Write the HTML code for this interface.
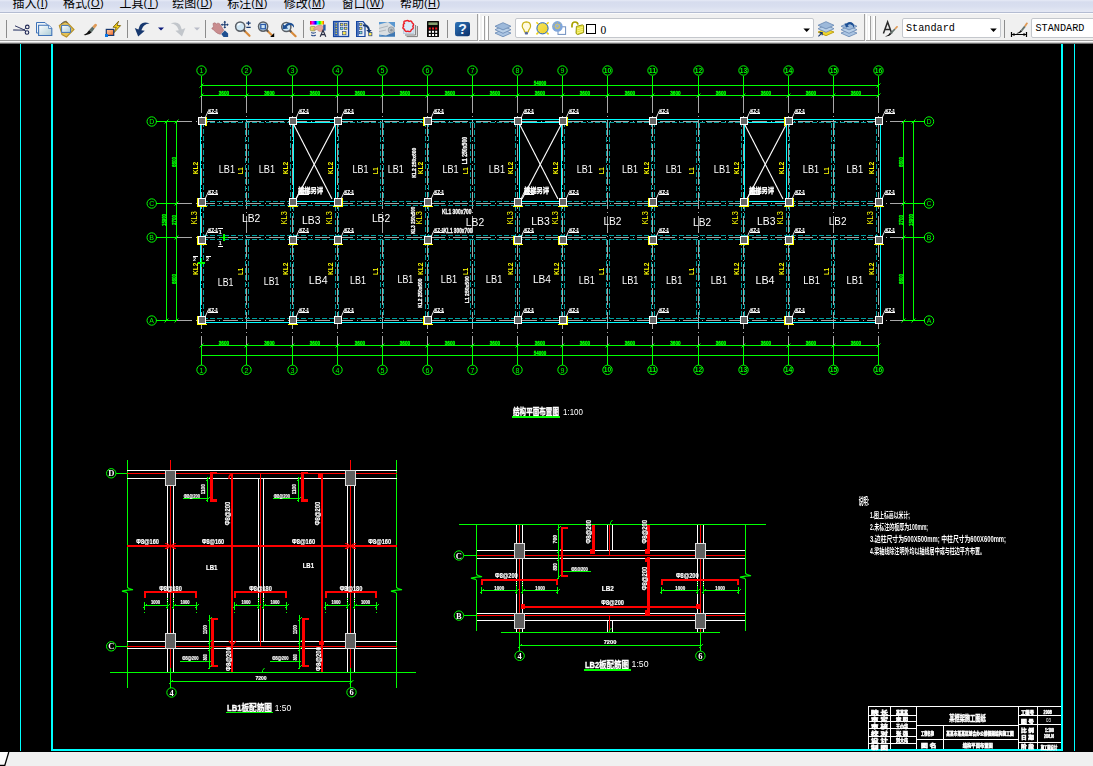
<!DOCTYPE html>
<html lang="zh-CN"><head><meta charset="utf-8"><title>AutoCAD</title>
<style>
html,body{margin:0;padding:0;}
body{width:1093px;height:766px;position:relative;overflow:hidden;background:#f0f0f0;font-family:"Liberation Sans","Noto Sans CJK SC",sans-serif;}
#menubar{position:absolute;left:0;top:0;width:1093px;height:12px;background:linear-gradient(#e6eaf6 0,#d6dcee 2px,#d8deef 6px,#e4e8f4 12px);border-bottom:1px solid #b4bcd2;overflow:hidden}
#mline{position:absolute;left:0;top:13px;width:1093px;height:1px;background:#fcfcfc}
.mi{position:absolute;top:-4.5px;font-size:12px;line-height:16px;color:#000;white-space:nowrap}
.p{font-size:11px;position:relative;top:-0.6px;letter-spacing:0.4px}
#tb{position:absolute;left:0;top:14px;width:1093px;height:26px;background:#f0f0f0}
.edge{position:absolute;left:0;width:1093px;height:1px}
.vln{position:absolute;width:1px}
.dd{position:absolute;top:18px;height:20px;background:#fff;border:1px solid #c4c7cc;border-radius:2px;box-sizing:border-box}
.ddt{position:absolute;top:22px;font-family:"Liberation Mono","Noto Sans CJK SC",monospace;font-size:10.2px;line-height:14px;color:#000;white-space:pre}
#canvas{position:absolute;left:0;top:44px;width:1093px;height:708px;background:#000}
#status{position:absolute;left:0;top:752px;width:1093px;height:14px;background:#f0f0f0}
</style></head><body>
<div id="menubar"><span class="mi" style="left:12.6px">插入<span class="p">(<u>I</u>)</span></span><span class="mi" style="left:62.9px">格式<span class="p">(<u>O</u>)</span></span><span class="mi" style="left:119.5px">工具<span class="p">(<u>T</u>)</span></span><span class="mi" style="left:172.3px">绘图<span class="p">(<u>D</u>)</span></span><span class="mi" style="left:227.2px">标注<span class="p">(<u>N</u>)</span></span><span class="mi" style="left:283.8px">修改<span class="p">(<u>M</u>)</span></span><span class="mi" style="left:341.7px">窗口<span class="p">(<u>W</u>)</span></span><span class="mi" style="left:400px">帮助<span class="p">(<u>H</u>)</span></span></div><div id="mline"></div>
<div id="tb"></div>
<div class="edge" style="top:40px;background:#a0a0a0;width:478px"></div>
<div class="edge" style="top:40px;left:479px;width:386px;background:#a0a0a0"></div>
<div class="edge" style="top:40px;left:866px;width:227px;background:#a0a0a0"></div>
<div class="edge" style="top:41px;background:#fafafa"></div>
<div class="edge" style="top:42px;background:#c8c8c8"></div>
<div class="edge" style="top:43px;background:#6e6e6e"></div>
<div class="vln" style="left:477px;top:14px;height:27px;background:#a0a0a0"></div>
<div class="vln" style="left:479px;top:14px;height:26px;background:#fff"></div>
<div class="vln" style="left:482px;top:16px;height:24px;background:#fff;width:2px"></div><div class="vln" style="left:484px;top:16px;height:24px;background:#a0a0a0"></div>
<div class="vln" style="left:486px;top:16px;height:24px;background:#fff;width:2px"></div><div class="vln" style="left:488px;top:16px;height:24px;background:#a0a0a0"></div>
<div class="vln" style="left:864px;top:14px;height:27px;background:#a0a0a0"></div>
<div class="vln" style="left:866px;top:14px;height:26px;background:#fff"></div>
<div class="vln" style="left:868px;top:16px;height:24px;background:#fff;width:2px"></div><div class="vln" style="left:870px;top:16px;height:24px;background:#a0a0a0"></div>
<div class="vln" style="left:873px;top:16px;height:24px;background:#fff;width:2px"></div><div class="vln" style="left:875px;top:16px;height:24px;background:#a0a0a0"></div>
<div class="dd" style="left:515px;width:299px"></div>
<div class="dd" style="left:902px;width:99px"></div>
<div class="dd" style="left:1031px;width:70px"></div>
<div class="ddt" style="left:600.5px;top:22.5px;font-family:'Liberation Serif',serif;font-size:11.5px">0</div>
<div class="ddt" style="left:906px">Standard</div>
<div class="ddt" style="left:1035.5px">STANDARD</div>
<svg width="1093" height="44" viewBox="0 0 1093 44" style="position:absolute;left:0;top:0"><defs>
<linearGradient id="gp" x1="0" y1="0" x2="1" y2="1"><stop offset="0" stop-color="#ffffff"/><stop offset="1" stop-color="#a9cbd6"/></linearGradient>
<linearGradient id="go" x1="0" y1="0" x2="1" y2="1"><stop offset="0" stop-color="#ffd2b0"/><stop offset="1" stop-color="#f0641e"/></linearGradient>
<linearGradient id="gh" x1="0" y1="0" x2="1" y2="1"><stop offset="0" stop-color="#2f74b8"/><stop offset="1" stop-color="#0a2f6a"/></linearGradient>
<linearGradient id="gs" x1="0" y1="0" x2="1" y2="1"><stop offset="0" stop-color="#f6e560"/><stop offset="1" stop-color="#ecd028"/></linearGradient>
<linearGradient id="rb" x1="0" y1="0" x2="1" y2="0"><stop offset="0" stop-color="#ff0000"/><stop offset="0.2" stop-color="#ff00ff"/><stop offset="0.4" stop-color="#0000ff"/><stop offset="0.55" stop-color="#00ffff"/><stop offset="0.7" stop-color="#00ff00"/><stop offset="0.85" stop-color="#ffff00"/><stop offset="1" stop-color="#ff4000"/></linearGradient>
</defs><g stroke="#1b2352" fill="none"><path d="M13.2 29.9 L24 30.2 L26 31.2 M15 25.8 L24 29.8 L25.6 28.4" stroke-width="0.9"/><path d="M13.2 30.4 L22 30.6" stroke="#7a83a0" stroke-width="0.9"/><circle cx="27.3" cy="26.9" r="1.8" stroke-width="1.1"/><circle cx="27" cy="32.5" r="1.8" stroke-width="1.1"/></g>
<path d="M36.5 22.5 h8.5 l2.5 2.5 v8 h-11 z" fill="#eef4f8" stroke="#3f73b8" stroke-width="1"/><path d="M38.6 25.3 h10 l3.2 3.2 v7 h-13.2 z" fill="url(#gp)" stroke="#3f73b8" stroke-width="1.1"/><path d="M48.6 25.3 v3.2 h3.2" fill="#fff" stroke="#3f73b8" stroke-width="0.8"/>
<path d="M59.3 25.5 L66 21.3 L74 29.5 L66.5 37 L62 34.6 Z" fill="#e4c258" stroke="#b8922a" stroke-width="1.1"/><path d="M61 24.2 q3 -4 6.5 -1.5" fill="none" stroke="#555" stroke-width="1"/><path d="M61.6 25.4 h6.4 l2.6 2.4 v4.6 h-9 z" fill="url(#gp)" stroke="#3f73b8" stroke-width="1"/>
<path d="M83.6 35 q3.6 -1.4 5.6 -5 l2.6 2.2 q-3 3.6 -8.2 2.8z" fill="#111"/><path d="M89.2 30 L92.4 26.6 L94.6 28.6 L91.8 32.2 Z" fill="#5f6f6a"/><path d="M92.4 26.6 L94.8 24 q2.2 -0.6 2.2 1.6 L94.6 28.6 Z" fill="#e09a56"/>
<path d="M118.6 21.2 L113 27.2 L116.3 27.4 L113.2 33.6 L120.6 25.6 L117 25.4 Z" fill="#f4d21a" stroke="#6b5200" stroke-width="0.8"/><rect x="106.3" y="29.4" width="7.4" height="6" fill="url(#go)" stroke="#17376e" stroke-width="1.2"/><rect x="105" y="34" width="3" height="3" fill="#0a78e6"/>
<rect x="127" y="20" width="1" height="18" fill="#8c8c8c" shape-rendering="crispEdges"/>
<rect x="6" y="20" width="1" height="18" fill="#8c8c8c" shape-rendering="crispEdges"/>
<path d="M149.6 23.4 q-9.5 -3.4 -11.2 6.2 l-3.6 -1.6 l3.4 8.4 l6.6 -5.6 l-3.4 -0.6 q1.6 -6.4 8.2 -6.8z" fill="#17386f"/>
<path d="M158 27.5 h6 l-3 3z" fill="#0b1a7a"/>
<path d="M170.6 23.4 q9.5 -3.4 11.2 6.2 l3.6 -1.6 l-3.4 8.4 l-6.6 -5.6 l3.4 -0.6 q-1.6 -6.4 -8.2 -6.8z" fill="#c2c6cb"/>
<path d="M194 27.5 h6 l-3 3z" fill="#b9bcc8"/>
<rect x="205" y="20" width="1" height="18" fill="#8c8c8c" shape-rendering="crispEdges"/>
<path d="M213 23.5 q2 -1.5 3.4 0.4 l1 -0.6 q1.8 -0.6 2.6 1 l3.8 6 l-3.4 4 q-3 -0.6 -5 -2.6 q-2.4 -2.6 -3.6 -3 q0 -1.4 1.8 -1 z" fill="#c98d8f" stroke="#a86c70" stroke-width="0.6"/><path d="M221.3 34 l3.6 -3.6 l3.2 3 v3.6 h-4.6z" fill="#1e4f90"/><path d="M224.8 21.6 v6.2 M221.7 24.7 h6.2" stroke="#17386f" stroke-width="1.1"/><path d="M224.8 20.8 l1.4 1.6 h-2.8z M224.8 28.6 l1.4 -1.6 h-2.8z M220.9 24.7 l1.6 -1.4 v2.8z M228.7 24.7 l-1.6 -1.4 v2.8z" fill="#17386f"/>
<path d="M243.39999999999998 29.8 L249.5 35.8" stroke="#d88a3a" stroke-width="2.2" stroke-linecap="round"/><path d="M243.39999999999998 29.8 L245.2 31.6" stroke="#555" stroke-width="2"/><circle cx="240.2" cy="26.6" r="4.6" fill="#cfe6f4" stroke="#5a5f66" stroke-width="1.5"/><path d="M237.6 25.6 q1 -2 3 -2" stroke="#fff" stroke-width="1.1" fill="none"/>
<path d="M246.3 23.2 h4.4 M248.5 21.2 v4 M246.3 27.4 h4.4" stroke="#17386f" stroke-width="1.2"/>
<path d="M266.3 29.8 L272.40000000000003 35.8" stroke="#d88a3a" stroke-width="2.2" stroke-linecap="round"/><path d="M266.3 29.8 L268.1 31.6" stroke="#555" stroke-width="2"/><circle cx="263.1" cy="26.6" r="4.6" fill="#cfe6f4" stroke="#5a5f66" stroke-width="1.5"/><path d="M260.5 25.6 q1 -2 3 -2" stroke="#fff" stroke-width="1.1" fill="none"/>
<rect x="260.8" y="24.4" width="4.6" height="4.4" fill="none" stroke="#2a5aa8" stroke-width="1.3"/><path d="M274.2 33 v4 h-4z" fill="#000"/>
<path d="M289.5 30.2 L295.6 36.2" stroke="#d88a3a" stroke-width="2.2" stroke-linecap="round"/><path d="M289.5 30.2 L291.3 32" stroke="#555" stroke-width="2"/><circle cx="286.3" cy="27" r="4.6" fill="#cfe6f4" stroke="#5a5f66" stroke-width="1.5"/><path d="M283.7 26 q1 -2 3 -2" stroke="#fff" stroke-width="1.1" fill="none"/>
<path d="M282.6 29.2 l0.4 -5.2 l1.6 1.4 q4 -4.6 8.6 -1.2 q1.4 1.6 0.6 3.6 q-1 -3 -4 -2.8 q-2 0.2 -3.2 2 l1.6 1.6z" fill="#1c4f94"/>
<rect x="303" y="20" width="1" height="18" fill="#8c8c8c" shape-rendering="crispEdges"/>
<rect x="310" y="21" width="14" height="3.6" fill="url(#rb)"/>
<rect x="310.3" y="26.4" width="5" height="4.4" rx="1" fill="#e6d85a" stroke="#8c8a4a" stroke-width="0.7"/><path d="M313.6 28.6 q3 -3.6 7.6 -3.6 l2.2 1.4 v4 q-3 2 -5 0.6 l-1.2 -1.6 l-3.2 0.6 z" fill="#e4a79c" stroke="#b77c74" stroke-width="0.5"/><rect x="323.2" y="24.6" width="2.4" height="6" fill="#2b5ca8"/><path d="M311.2 32.4 q2.4 1.4 4.6 0 M311.2 35 q2.4 1.6 4.6 0" fill="none" stroke="#2c4e8c" stroke-width="1.1"/><path d="M320.2 36.8 l2.8 -6.6 l2.8 6.6 M321.2 34.6 h3.6" fill="none" stroke="#2a2f45" stroke-width="1.2"/>
<rect x="333.6" y="21.5" width="15" height="15" fill="#e9eff7" stroke="#1546a0" stroke-width="1.3"/><rect x="334.3" y="22.2" width="3.6" height="13.6" fill="#2a59b0"/><path d="M338.6 22 v14" stroke="#1546a0" stroke-width="0.7"/><rect x="335.6" y="23.2" width="1.2" height="1.2" fill="#ffe43a"/><rect x="335.6" y="25.6" width="1.2" height="1.2" fill="#ffe43a"/><rect x="335.6" y="28" width="1.2" height="1.2" fill="#ffe43a"/><rect x="335.6" y="30.4" width="1.2" height="1.2" fill="#ffe43a"/><rect x="335.6" y="32.8" width="1.2" height="1.2" fill="#ffe43a"/><rect x="340.4" y="23.4" width="2.6" height="2.4" fill="#f2e24a" stroke="#1f3f86" stroke-width="0.6"/><rect x="344.4" y="23.4" width="2.6" height="2.4" fill="#f2e24a" stroke="#1f3f86" stroke-width="0.6"/><rect x="340.4" y="27.2" width="2.6" height="2.4" fill="#7fe0d0" stroke="#1f3f86" stroke-width="0.6"/><rect x="344.4" y="27.2" width="2.6" height="2.4" fill="#f2e24a" stroke="#1f3f86" stroke-width="0.6"/><rect x="342.4" y="31.4" width="3.6" height="3.4" fill="#ffe94a" stroke="#1f3f86" stroke-width="0.6"/>
<path d="M356.6 21.5 h6.4 l2 2.4 v12.6 h-8.4z" fill="#e4ebf5" stroke="#1546a0" stroke-width="1.2"/><rect x="357.2" y="22.2" width="1.6" height="13.6" fill="#2a59b0"/><rect x="359.6" y="23.2" width="2.4" height="2.4" fill="#f2e24a" stroke="#1f3f86" stroke-width="0.6"/><rect x="359.6" y="27.2" width="2.4" height="2.4" fill="#f2e24a" stroke="#1f3f86" stroke-width="0.6"/><rect x="359.6" y="31.4" width="2.4" height="2.4" fill="#7fe0d0" stroke="#1f3f86" stroke-width="0.6"/><path d="M363 24.4 q6 -0.6 7 5.6 h1.8 l-2.8 3 l-2.8 -3 h1.8 q-0.6 -4 -5 -3.8z" fill="#17386f"/><rect x="368.7" y="32.4" width="3.2" height="3.4" fill="#ffe94a" stroke="#1f3f86" stroke-width="0.7"/>
<rect x="379" y="22" width="16" height="14.6" fill="#5b98d0"/><path d="M379 36.6 L395 30 V36.6z" fill="#3f78b4"/><path d="M379 24.6 L388 22 L395 27.4 V31.4 L386 35.6 L379 34.4z" fill="#d9dee2"/><ellipse cx="391.2" cy="30" rx="3" ry="3.2" fill="#b9c0c6" stroke="#8e979f" stroke-width="0.8"/><ellipse cx="391.4" cy="30.2" rx="1.2" ry="1.4" fill="#8a939b"/><path d="M379 28.4 L388 26 M379 31.6 L386 30" stroke="#aab2b9" stroke-width="0.9"/>
<path d="M405 35 h10.6 v-10 M406.6 36.6 h10.8 v-10.6" fill="none" stroke="#7d7d7d" stroke-width="1"/><rect x="403.4" y="24" width="10.6" height="9.6" fill="#d3e4f3" stroke="#a8bcd0" stroke-width="0.6"/><path d="M404.4 23.4 q-1.6 -2.6 1.4 -2.4 q2 -1.2 3.2 0.4 q2.6 -1.4 3.2 1.4 q2.4 1.4 0.6 3.4 q1.4 2.6 -1.4 3.4 q-0.6 3 -3.6 1.6 q-3 1 -3.4 -2 q-2.6 -1 -0.8 -3 q-1 -1.6 0.8 -2.8z" fill="#d8ebfa" stroke="#ee1c24" stroke-width="1.4"/>
<rect x="427" y="21" width="12" height="16" rx="0.6" fill="#0a0a0a"/><rect x="428.4" y="22.4" width="9.2" height="2.6" fill="#84a070"/><rect x="428.8" y="27.5" width="2" height="2" fill="#ee1c24"/><rect x="432" y="27.5" width="2" height="2" fill="#ee1c24"/><rect x="435.2" y="27.5" width="2" height="2" fill="#ee1c24"/><rect x="428.8" y="30.8" width="2" height="2" fill="#fff"/><rect x="428.8" y="34" width="2" height="2" fill="#fff"/><rect x="432" y="30.8" width="2" height="2" fill="#fff"/><rect x="432" y="34" width="2" height="2" fill="#fff"/><rect x="435.2" y="30.8" width="2" height="2" fill="#fff"/><rect x="435.2" y="34" width="2" height="2" fill="#fff"/>
<rect x="447" y="20" width="1" height="18" fill="#8c8c8c" shape-rendering="crispEdges"/>
<rect x="455" y="22" width="15" height="14.2" rx="2.2" fill="url(#gh)"/><text x="462.5" y="34.4" font-size="14" font-weight="bold" fill="#eaf4ff" text-anchor="middle" font-family="'Liberation Sans',sans-serif">?</text>
<path d="M495 33.1 L503 29.5 L511 33.1 L503 36.7 Z" fill="#aac4e2" stroke="#6f8fb8" stroke-width="0.9"/><path d="M495 29.700000000000003 L503 26.1 L511 29.700000000000003 L503 33.300000000000004 Z" fill="#b9d0e8" stroke="#6f8fb8" stroke-width="0.9"/><path d="M495 26.3 L503 22.7 L511 26.3 L503 29.900000000000002 Z" fill="#9db9da" stroke="#6f8fb8" stroke-width="0.9"/>
<path d="M526.4 21.8 q-4.2 0.2 -4.2 4.4 q0.2 2 1.8 3.8 l0.6 2 h3.6 l0.6 -2 q1.6 -1.8 1.8 -3.8 q0 -4.2 -4.2 -4.4z" fill="#fffbe0" stroke="#c9b218" stroke-width="1.2"/><rect x="524.8" y="32" width="3.2" height="2.6" rx="0.8" fill="#5a6a9a"/>
<path d="M536.4 22.2 l2 2 M548.6 22.2 l-2 2 M536.4 34.4 l2 -2 M548.6 34.4 l-2 -2" stroke="#efd21e" stroke-width="1.6"/><circle cx="542.5" cy="28.3" r="5.6" fill="url(#gs)" stroke="#1e62c8" stroke-width="1"/>
<rect x="558" y="26.8" width="7.6" height="7.6" fill="#fff" stroke="#6f8fc0" stroke-width="1"/><circle cx="557.4" cy="26.4" r="5.3" fill="#7fa6dc"/><circle cx="557.4" cy="26.4" r="2.3" fill="#8fb0e0" stroke="#d8c860" stroke-width="1"/><path d="M557.4 21.8 v9.2 M552.8 26.4 h9.2 M554.2 23.2 l6.4 6.4 M560.6 23.2 l-6.4 6.4" stroke="#c9bc6a" stroke-width="0.7" stroke-dasharray="1.4 4"/>
<path d="M572 27.4 v-2.4 q0.2 -3 3 -3 q2.6 0 3 2.6" fill="none" stroke="#a8a000" stroke-width="1.7"/><path d="M576.4 26.4 l6.2 -1.6 l1 1 v6.8 l-6 2 l-1.6 -1.2z" fill="#e8e23a" stroke="#8f8a00" stroke-width="0.9"/><path d="M577 29 l6 -1.8 M577 31 l6 -1.8 M577 33 l6 -1.8" stroke="#fffcae" stroke-width="0.7"/>
<rect x="586.5" y="24.5" width="9" height="9" fill="#fff" stroke="#000" stroke-width="1" shape-rendering="crispEdges"/>
<path d="M803.4 28.4 h6.6 l-3.3 3.6z" fill="#000"/>
<path d="M818 32.1 L826 28.5 L834 32.1 L826 35.7 Z" fill="#f0d52a" stroke="#b89a10" stroke-width="0.9"/><path d="M818 28.700000000000003 L826 25.1 L834 28.700000000000003 L826 32.300000000000004 Z" fill="#b9d0e8" stroke="#6f8fb8" stroke-width="0.9"/><path d="M818 25.3 L826 21.7 L834 25.3 L826 28.900000000000002 Z" fill="#9db9da" stroke="#6f8fb8" stroke-width="0.9"/>
<path d="M818.4 36.4 l3.6 -3.6 M819.6 32.6 h2.6 v2.6" stroke="#17386f" stroke-width="1.1" fill="none"/>
<path d="M841 33.1 L849 29.5 L857 33.1 L849 36.7 Z" fill="#aac4e2" stroke="#6f8fb8" stroke-width="0.9"/><path d="M841 29.700000000000003 L849 26.1 L857 29.700000000000003 L849 33.300000000000004 Z" fill="#b9d0e8" stroke="#6f8fb8" stroke-width="0.9"/><path d="M841 26.3 L849 22.7 L857 26.3 L849 29.900000000000002 Z" fill="#9db9da" stroke="#6f8fb8" stroke-width="0.9"/>
<path d="M846 27.4 l-1.4 -4.2 l1.6 0.6 q3.4 -3.4 7 -0.4 q1.6 2 0.4 4.4 q-0.4 -3 -3 -3.4 q-1.8 -0.2 -3 1 l1.6 0.8z" fill="#1c4f94"/>
<path d="M883.4 33.4 l4.2 -11.4 l4.2 11.4 M885 29.6 h5.4" fill="none" stroke="#2b2b2b" stroke-width="1.5"/><path d="M885 36.4 q3.4 -0.4 5 -3.6 l1.4 1.2 q-2 2.8 -6.4 2.4z" fill="#111"/><path d="M890 32.8 L894.4 28.4 L895.6 29.6 L891.4 34z" fill="#66736e"/><path d="M894.4 28.4 L896.6 26 q1.4 -0.4 1.4 1 L895.6 29.6z" fill="#e09a56"/>
<path d="M990.2 28.4 h6.6 l-3.3 3.6z" fill="#000"/>
<rect x="1004" y="20" width="1" height="18" fill="#8c8c8c" shape-rendering="crispEdges"/>
<path d="M1011.5 32 v5 M1026.5 32 v5 M1011.5 34.5 h15" stroke="#000" stroke-width="1.2" fill="none"/><path d="M1011.5 34.5 l3 -1.6 v3.2z M1026.5 34.5 l-3 -1.6 v3.2z" fill="#000"/><path d="M1015.6 33.6 q3.6 -0.4 5.2 -3.6 l1.4 1.2 q-2 2.8 -6.6 2.4z" fill="#111"/><path d="M1020.8 30 L1024.2 25.8 L1025.6 27 L1022.2 31.2z" fill="#66736e"/><path d="M1024.2 25.8 L1026.4 22.6 q1.4 -0.4 1.4 1 L1025.6 27z" fill="#e09a56"/></svg>
<div id="canvas"></div>
<div id="status"><svg width="40" height="14" style="position:absolute;left:0;top:0"><path d="M0 0 H8.8 L4.6 14 H0z" fill="#fbfbfb"/><path d="M8.8 0 L4.6 14 M0 13.3 H4.4" fill="none" stroke="#000" stroke-width="1.3"/></svg></div>
<svg width="1093" height="766" viewBox="0 0 1093 766" style="position:absolute;left:0;top:0;will-change:transform" shape-rendering="crispEdges" font-family="'Liberation Sans','Noto Sans CJK SC',sans-serif">
<rect x="20" y="44" width="1" height="707" fill="#00ffff"/>
<rect x="51" y="44" width="2" height="707" fill="#00ffff"/>
<rect x="1061" y="44" width="2" height="707" fill="#00ffff"/>
<rect x="1074" y="44" width="1" height="707" fill="#00ffff"/>
<rect x="51" y="749" width="1012" height="2" fill="#00ffff"/>
<line x1="201.5" y1="96" x2="201.5" y2="346" stroke="#a8a8a8" stroke-dasharray="17 3 1 3"/>
<line x1="246.5" y1="96" x2="246.5" y2="346" stroke="#a8a8a8" stroke-dasharray="17 3 1 3"/>
<line x1="292.5" y1="96" x2="292.5" y2="346" stroke="#a8a8a8" stroke-dasharray="17 3 1 3"/>
<line x1="337.5" y1="96" x2="337.5" y2="346" stroke="#a8a8a8" stroke-dasharray="17 3 1 3"/>
<line x1="382.5" y1="96" x2="382.5" y2="346" stroke="#a8a8a8" stroke-dasharray="17 3 1 3"/>
<line x1="427.5" y1="96" x2="427.5" y2="346" stroke="#a8a8a8" stroke-dasharray="17 3 1 3"/>
<line x1="472.5" y1="96" x2="472.5" y2="346" stroke="#a8a8a8" stroke-dasharray="17 3 1 3"/>
<line x1="517.5" y1="96" x2="517.5" y2="346" stroke="#a8a8a8" stroke-dasharray="17 3 1 3"/>
<line x1="562.5" y1="96" x2="562.5" y2="346" stroke="#a8a8a8" stroke-dasharray="17 3 1 3"/>
<line x1="607.5" y1="96" x2="607.5" y2="346" stroke="#a8a8a8" stroke-dasharray="17 3 1 3"/>
<line x1="652.5" y1="96" x2="652.5" y2="346" stroke="#a8a8a8" stroke-dasharray="17 3 1 3"/>
<line x1="698.5" y1="96" x2="698.5" y2="346" stroke="#a8a8a8" stroke-dasharray="17 3 1 3"/>
<line x1="743.5" y1="96" x2="743.5" y2="346" stroke="#a8a8a8" stroke-dasharray="17 3 1 3"/>
<line x1="788.5" y1="96" x2="788.5" y2="346" stroke="#a8a8a8" stroke-dasharray="17 3 1 3"/>
<line x1="833.5" y1="96" x2="833.5" y2="346" stroke="#a8a8a8" stroke-dasharray="17 3 1 3"/>
<line x1="878.5" y1="96" x2="878.5" y2="346" stroke="#a8a8a8" stroke-dasharray="17 3 1 3"/>
<line x1="177" y1="121.5" x2="903" y2="121.5" stroke="#a8a8a8" stroke-dasharray="15 3.5 1 3.5"/>
<line x1="177" y1="203.5" x2="903" y2="203.5" stroke="#a8a8a8" stroke-dasharray="15 3.5 1 3.5"/>
<line x1="177" y1="237.5" x2="903" y2="237.5" stroke="#a8a8a8" stroke-dasharray="15 3.5 1 3.5"/>
<line x1="177" y1="320.5" x2="903" y2="320.5" stroke="#a8a8a8" stroke-dasharray="15 3.5 1 3.5"/>
<rect x="200" y="119" width="681" height="1" fill="#00ffff"/>
<rect x="200" y="322" width="681" height="1" fill="#00ffff"/>
<rect x="200" y="119" width="1" height="204" fill="#00ffff"/>
<rect x="880" y="119" width="1" height="204" fill="#00ffff"/>
<line x1="203" y1="122.5" x2="878" y2="122.5" stroke="#00a0a0" stroke-dasharray="5 2"/>
<line x1="203" y1="201.5" x2="878" y2="201.5" stroke="#00a0a0" stroke-dasharray="5 2"/>
<line x1="203" y1="205.5" x2="878" y2="205.5" stroke="#00a0a0" stroke-dasharray="5 2"/>
<line x1="203" y1="235.5" x2="878" y2="235.5" stroke="#00a0a0" stroke-dasharray="5 2"/>
<line x1="203" y1="239.5" x2="878" y2="239.5" stroke="#00a0a0" stroke-dasharray="5 2"/>
<line x1="203" y1="318.5" x2="878" y2="318.5" stroke="#00a0a0" stroke-dasharray="5 2"/>
<line x1="203.5" y1="122" x2="203.5" y2="319" stroke="#00a0a0" stroke-dasharray="5 2"/>
<line x1="245.5" y1="123" x2="245.5" y2="201" stroke="#00a0a0" stroke-dasharray="5 2"/>
<line x1="248.5" y1="123" x2="248.5" y2="201" stroke="#00a0a0" stroke-dasharray="5 2"/>
<line x1="245.5" y1="240" x2="245.5" y2="318" stroke="#00a0a0" stroke-dasharray="5 2"/>
<line x1="248.5" y1="240" x2="248.5" y2="318" stroke="#00a0a0" stroke-dasharray="5 2"/>
<line x1="290.5" y1="122" x2="290.5" y2="319" stroke="#00a0a0" stroke-dasharray="5 2"/>
<line x1="293.5" y1="122" x2="293.5" y2="319" stroke="#00a0a0" stroke-dasharray="5 2"/>
<line x1="335.5" y1="122" x2="335.5" y2="319" stroke="#00a0a0" stroke-dasharray="5 2"/>
<line x1="338.5" y1="122" x2="338.5" y2="319" stroke="#00a0a0" stroke-dasharray="5 2"/>
<line x1="380.5" y1="123" x2="380.5" y2="201" stroke="#00a0a0" stroke-dasharray="5 2"/>
<line x1="383.5" y1="123" x2="383.5" y2="201" stroke="#00a0a0" stroke-dasharray="5 2"/>
<line x1="380.5" y1="240" x2="380.5" y2="318" stroke="#00a0a0" stroke-dasharray="5 2"/>
<line x1="383.5" y1="240" x2="383.5" y2="318" stroke="#00a0a0" stroke-dasharray="5 2"/>
<line x1="425.5" y1="122" x2="425.5" y2="319" stroke="#00a0a0" stroke-dasharray="5 2"/>
<line x1="428.5" y1="122" x2="428.5" y2="319" stroke="#00a0a0" stroke-dasharray="5 2"/>
<line x1="470.5" y1="123" x2="470.5" y2="201" stroke="#00a0a0" stroke-dasharray="5 2"/>
<line x1="474.5" y1="123" x2="474.5" y2="201" stroke="#00a0a0" stroke-dasharray="5 2"/>
<line x1="470.5" y1="240" x2="470.5" y2="318" stroke="#00a0a0" stroke-dasharray="5 2"/>
<line x1="474.5" y1="240" x2="474.5" y2="318" stroke="#00a0a0" stroke-dasharray="5 2"/>
<line x1="515.5" y1="122" x2="515.5" y2="319" stroke="#00a0a0" stroke-dasharray="5 2"/>
<line x1="519.5" y1="122" x2="519.5" y2="319" stroke="#00a0a0" stroke-dasharray="5 2"/>
<line x1="561.5" y1="122" x2="561.5" y2="319" stroke="#00a0a0" stroke-dasharray="5 2"/>
<line x1="564.5" y1="122" x2="564.5" y2="319" stroke="#00a0a0" stroke-dasharray="5 2"/>
<line x1="606.5" y1="123" x2="606.5" y2="201" stroke="#00a0a0" stroke-dasharray="5 2"/>
<line x1="609.5" y1="123" x2="609.5" y2="201" stroke="#00a0a0" stroke-dasharray="5 2"/>
<line x1="606.5" y1="240" x2="606.5" y2="318" stroke="#00a0a0" stroke-dasharray="5 2"/>
<line x1="609.5" y1="240" x2="609.5" y2="318" stroke="#00a0a0" stroke-dasharray="5 2"/>
<line x1="651.5" y1="122" x2="651.5" y2="319" stroke="#00a0a0" stroke-dasharray="5 2"/>
<line x1="654.5" y1="122" x2="654.5" y2="319" stroke="#00a0a0" stroke-dasharray="5 2"/>
<line x1="696.5" y1="123" x2="696.5" y2="201" stroke="#00a0a0" stroke-dasharray="5 2"/>
<line x1="699.5" y1="123" x2="699.5" y2="201" stroke="#00a0a0" stroke-dasharray="5 2"/>
<line x1="696.5" y1="240" x2="696.5" y2="318" stroke="#00a0a0" stroke-dasharray="5 2"/>
<line x1="699.5" y1="240" x2="699.5" y2="318" stroke="#00a0a0" stroke-dasharray="5 2"/>
<line x1="741.5" y1="122" x2="741.5" y2="319" stroke="#00a0a0" stroke-dasharray="5 2"/>
<line x1="744.5" y1="122" x2="744.5" y2="319" stroke="#00a0a0" stroke-dasharray="5 2"/>
<line x1="786.5" y1="122" x2="786.5" y2="319" stroke="#00a0a0" stroke-dasharray="5 2"/>
<line x1="789.5" y1="122" x2="789.5" y2="319" stroke="#00a0a0" stroke-dasharray="5 2"/>
<line x1="831.5" y1="123" x2="831.5" y2="201" stroke="#00a0a0" stroke-dasharray="5 2"/>
<line x1="834.5" y1="123" x2="834.5" y2="201" stroke="#00a0a0" stroke-dasharray="5 2"/>
<line x1="831.5" y1="240" x2="831.5" y2="318" stroke="#00a0a0" stroke-dasharray="5 2"/>
<line x1="834.5" y1="240" x2="834.5" y2="318" stroke="#00a0a0" stroke-dasharray="5 2"/>
<line x1="876.5" y1="122" x2="876.5" y2="319" stroke="#00a0a0" stroke-dasharray="5 2"/>
<rect x="293" y="122" width="1" height="80" fill="#00ffff"/>
<rect x="335" y="122" width="1" height="80" fill="#00ffff"/>
<rect x="293" y="122" width="43" height="1" fill="#00ffff"/>
<rect x="293" y="201" width="43" height="1" fill="#00ffff"/>
<g shape-rendering="auto">
<line x1="293.5" y1="124" x2="332" y2="199" stroke="#ffffff" stroke-width="1.15" />
<line x1="335.5" y1="124" x2="296" y2="199" stroke="#ffffff" stroke-width="1.15" />
</g>
<text x="298" y="192.7" fill="#ffffff" font-size="7" textLength="25" lengthAdjust="spacingAndGlyphs" font-weight="bold" stroke="#fff" stroke-width="0.35">楼梯另详</text>
<rect x="519" y="122" width="1" height="80" fill="#00ffff"/>
<rect x="561" y="122" width="1" height="80" fill="#00ffff"/>
<rect x="519" y="122" width="43" height="1" fill="#00ffff"/>
<rect x="519" y="201" width="43" height="1" fill="#00ffff"/>
<g shape-rendering="auto">
<line x1="519.5" y1="124" x2="558" y2="199" stroke="#ffffff" stroke-width="1.15" />
<line x1="561.5" y1="124" x2="522" y2="199" stroke="#ffffff" stroke-width="1.15" />
</g>
<text x="524" y="192.7" fill="#ffffff" font-size="7" textLength="25" lengthAdjust="spacingAndGlyphs" font-weight="bold" stroke="#fff" stroke-width="0.35">楼梯另详</text>
<rect x="744" y="122" width="1" height="80" fill="#00ffff"/>
<rect x="786" y="122" width="1" height="80" fill="#00ffff"/>
<rect x="744" y="122" width="43" height="1" fill="#00ffff"/>
<rect x="744" y="201" width="43" height="1" fill="#00ffff"/>
<g shape-rendering="auto">
<line x1="744.5" y1="124" x2="783" y2="199" stroke="#ffffff" stroke-width="1.15" />
<line x1="786.5" y1="124" x2="747" y2="199" stroke="#ffffff" stroke-width="1.15" />
</g>
<text x="749" y="192.7" fill="#ffffff" font-size="7" textLength="25" lengthAdjust="spacingAndGlyphs" font-weight="bold" stroke="#fff" stroke-width="0.35">楼梯另详</text>
<rect x="205" y="117" width="2" height="9" fill="#ffff00"/>
<rect x="198" y="117" width="8" height="8" fill="#ffffff"/>
<rect x="199" y="118" width="6" height="6" fill="#666666"/>
<g shape-rendering="auto">
<line x1="205.5" y1="117" x2="208.5" y2="110.5" stroke="#ffffff" stroke-width="0.9" />
</g>
<rect x="208" y="113" width="10" height="1" fill="#ffffff"/>
<text x="208.5" y="112.7" fill="#ffffff" font-size="5" textLength="9.5" lengthAdjust="spacingAndGlyphs" font-weight="bold" stroke="#fff" stroke-width="0.15">KZ-1</text>
<rect x="197" y="198" width="2" height="9" fill="#ffff00"/>
<rect x="197" y="206" width="10" height="1" fill="#ffff00"/>
<rect x="198" y="198" width="8" height="8" fill="#ffffff"/>
<rect x="199" y="199" width="6" height="6" fill="#666666"/>
<g shape-rendering="auto">
<line x1="205.5" y1="198" x2="208.5" y2="191.5" stroke="#ffffff" stroke-width="0.9" />
</g>
<rect x="208" y="194" width="10" height="1" fill="#ffffff"/>
<text x="208.5" y="193.7" fill="#ffffff" font-size="5" textLength="9.5" lengthAdjust="spacingAndGlyphs" font-weight="bold" stroke="#fff" stroke-width="0.15">KZ-1</text>
<rect x="197" y="236" width="2" height="9" fill="#ffff00"/>
<rect x="197" y="244" width="10" height="1" fill="#ffff00"/>
<rect x="198" y="236" width="8" height="8" fill="#ffffff"/>
<rect x="199" y="237" width="6" height="6" fill="#666666"/>
<g shape-rendering="auto">
<line x1="205.5" y1="236" x2="208.5" y2="229.5" stroke="#ffffff" stroke-width="0.9" />
</g>
<rect x="208" y="232" width="10" height="1" fill="#ffffff"/>
<text x="208.5" y="231.7" fill="#ffffff" font-size="5" textLength="9.5" lengthAdjust="spacingAndGlyphs" font-weight="bold" stroke="#fff" stroke-width="0.15">KZ-1</text>
<rect x="197" y="316" width="2" height="9" fill="#ffff00"/>
<rect x="197" y="324" width="10" height="1" fill="#ffff00"/>
<rect x="198" y="316" width="8" height="8" fill="#ffffff"/>
<rect x="199" y="317" width="6" height="6" fill="#666666"/>
<g shape-rendering="auto">
<line x1="205.5" y1="316" x2="208.5" y2="309.5" stroke="#ffffff" stroke-width="0.9" />
</g>
<rect x="208" y="312" width="10" height="1" fill="#ffffff"/>
<text x="208.5" y="311.7" fill="#ffffff" font-size="5" textLength="9.5" lengthAdjust="spacingAndGlyphs" font-weight="bold" stroke="#fff" stroke-width="0.15">KZ-1</text>
<rect x="289" y="117" width="8" height="8" fill="#ffffff"/>
<rect x="290" y="118" width="6" height="6" fill="#666666"/>
<g shape-rendering="auto">
<line x1="296.5" y1="117" x2="299.5" y2="110.5" stroke="#ffffff" stroke-width="0.9" />
</g>
<rect x="299" y="113" width="10" height="1" fill="#ffffff"/>
<text x="299.5" y="112.7" fill="#ffffff" font-size="5" textLength="9.5" lengthAdjust="spacingAndGlyphs" font-weight="bold" stroke="#fff" stroke-width="0.15">KZ-1</text>
<rect x="288" y="206" width="10" height="1" fill="#ffff00"/>
<rect x="289" y="198" width="8" height="8" fill="#ffffff"/>
<rect x="290" y="199" width="6" height="6" fill="#666666"/>
<g shape-rendering="auto">
<line x1="296.5" y1="198" x2="299.5" y2="191.5" stroke="#ffffff" stroke-width="0.9" />
</g>
<rect x="299" y="194" width="10" height="1" fill="#ffffff"/>
<text x="299.5" y="193.7" fill="#ffffff" font-size="5" textLength="9.5" lengthAdjust="spacingAndGlyphs" font-weight="bold" stroke="#fff" stroke-width="0.15">KZ-1</text>
<rect x="288" y="244" width="10" height="1" fill="#ffff00"/>
<rect x="289" y="236" width="8" height="8" fill="#ffffff"/>
<rect x="290" y="237" width="6" height="6" fill="#666666"/>
<g shape-rendering="auto">
<line x1="296.5" y1="236" x2="299.5" y2="229.5" stroke="#ffffff" stroke-width="0.9" />
</g>
<rect x="299" y="232" width="10" height="1" fill="#ffffff"/>
<text x="299.5" y="231.7" fill="#ffffff" font-size="5" textLength="9.5" lengthAdjust="spacingAndGlyphs" font-weight="bold" stroke="#fff" stroke-width="0.15">KZ-1</text>
<rect x="288" y="324" width="10" height="1" fill="#ffff00"/>
<rect x="289" y="316" width="8" height="8" fill="#ffffff"/>
<rect x="290" y="317" width="6" height="6" fill="#666666"/>
<g shape-rendering="auto">
<line x1="296.5" y1="316" x2="299.5" y2="309.5" stroke="#ffffff" stroke-width="0.9" />
</g>
<rect x="299" y="312" width="10" height="1" fill="#ffffff"/>
<text x="299.5" y="311.7" fill="#ffffff" font-size="5" textLength="9.5" lengthAdjust="spacingAndGlyphs" font-weight="bold" stroke="#fff" stroke-width="0.15">KZ-1</text>
<rect x="334" y="117" width="8" height="8" fill="#ffffff"/>
<rect x="335" y="118" width="6" height="6" fill="#666666"/>
<g shape-rendering="auto">
<line x1="341.5" y1="117" x2="344.5" y2="110.5" stroke="#ffffff" stroke-width="0.9" />
</g>
<rect x="344" y="113" width="10" height="1" fill="#ffffff"/>
<text x="344.5" y="112.7" fill="#ffffff" font-size="5" textLength="9.5" lengthAdjust="spacingAndGlyphs" font-weight="bold" stroke="#fff" stroke-width="0.15">KZ-1</text>
<rect x="341" y="198" width="2" height="9" fill="#ffff00"/>
<rect x="333" y="206" width="10" height="1" fill="#ffff00"/>
<rect x="334" y="198" width="8" height="8" fill="#ffffff"/>
<rect x="335" y="199" width="6" height="6" fill="#666666"/>
<g shape-rendering="auto">
<line x1="341.5" y1="198" x2="344.5" y2="191.5" stroke="#ffffff" stroke-width="0.9" />
</g>
<rect x="344" y="194" width="10" height="1" fill="#ffffff"/>
<text x="344.5" y="193.7" fill="#ffffff" font-size="5" textLength="9.5" lengthAdjust="spacingAndGlyphs" font-weight="bold" stroke="#fff" stroke-width="0.15">KZ-1</text>
<rect x="333" y="244" width="10" height="1" fill="#ffff00"/>
<rect x="334" y="236" width="8" height="8" fill="#ffffff"/>
<rect x="335" y="237" width="6" height="6" fill="#666666"/>
<g shape-rendering="auto">
<line x1="341.5" y1="236" x2="344.5" y2="229.5" stroke="#ffffff" stroke-width="0.9" />
</g>
<rect x="344" y="232" width="10" height="1" fill="#ffffff"/>
<text x="344.5" y="231.7" fill="#ffffff" font-size="5" textLength="9.5" lengthAdjust="spacingAndGlyphs" font-weight="bold" stroke="#fff" stroke-width="0.15">KZ-1</text>
<rect x="334" y="316" width="8" height="8" fill="#ffffff"/>
<rect x="335" y="317" width="6" height="6" fill="#666666"/>
<g shape-rendering="auto">
<line x1="341.5" y1="316" x2="344.5" y2="309.5" stroke="#ffffff" stroke-width="0.9" />
</g>
<rect x="344" y="312" width="10" height="1" fill="#ffffff"/>
<text x="344.5" y="311.7" fill="#ffffff" font-size="5" textLength="9.5" lengthAdjust="spacingAndGlyphs" font-weight="bold" stroke="#fff" stroke-width="0.15">KZ-1</text>
<rect x="423" y="117" width="2" height="9" fill="#ffff00"/>
<rect x="424" y="117" width="8" height="8" fill="#ffffff"/>
<rect x="425" y="118" width="6" height="6" fill="#666666"/>
<g shape-rendering="auto">
<line x1="431.5" y1="117" x2="434.5" y2="110.5" stroke="#ffffff" stroke-width="0.9" />
</g>
<rect x="434" y="113" width="10" height="1" fill="#ffffff"/>
<text x="434.5" y="112.7" fill="#ffffff" font-size="5" textLength="9.5" lengthAdjust="spacingAndGlyphs" font-weight="bold" stroke="#fff" stroke-width="0.15">KZ-1</text>
<rect x="423" y="206" width="10" height="1" fill="#ffff00"/>
<rect x="424" y="198" width="8" height="8" fill="#ffffff"/>
<rect x="425" y="199" width="6" height="6" fill="#666666"/>
<g shape-rendering="auto">
<line x1="431.5" y1="198" x2="434.5" y2="191.5" stroke="#ffffff" stroke-width="0.9" />
</g>
<rect x="434" y="194" width="10" height="1" fill="#ffffff"/>
<text x="434.5" y="193.7" fill="#ffffff" font-size="5" textLength="9.5" lengthAdjust="spacingAndGlyphs" font-weight="bold" stroke="#fff" stroke-width="0.15">KZ-1</text>
<rect x="423" y="244" width="10" height="1" fill="#ffff00"/>
<rect x="424" y="236" width="8" height="8" fill="#ffffff"/>
<rect x="425" y="237" width="6" height="6" fill="#666666"/>
<g shape-rendering="auto">
<line x1="431.5" y1="236" x2="434.5" y2="229.5" stroke="#ffffff" stroke-width="0.9" />
</g>
<rect x="434" y="232" width="10" height="1" fill="#ffffff"/>
<text x="434.5" y="231.7" fill="#ffffff" font-size="5" textLength="9.5" lengthAdjust="spacingAndGlyphs" font-weight="bold" stroke="#fff" stroke-width="0.15">KZ-1</text>
<rect x="423" y="316" width="2" height="9" fill="#ffff00"/>
<rect x="423" y="324" width="10" height="1" fill="#ffff00"/>
<rect x="424" y="316" width="8" height="8" fill="#ffffff"/>
<rect x="425" y="317" width="6" height="6" fill="#666666"/>
<g shape-rendering="auto">
<line x1="431.5" y1="316" x2="434.5" y2="309.5" stroke="#ffffff" stroke-width="0.9" />
</g>
<rect x="434" y="312" width="10" height="1" fill="#ffffff"/>
<text x="434.5" y="311.7" fill="#ffffff" font-size="5" textLength="9.5" lengthAdjust="spacingAndGlyphs" font-weight="bold" stroke="#fff" stroke-width="0.15">KZ-1</text>
<rect x="514" y="117" width="8" height="8" fill="#ffffff"/>
<rect x="515" y="118" width="6" height="6" fill="#666666"/>
<g shape-rendering="auto">
<line x1="521.5" y1="117" x2="524.5" y2="110.5" stroke="#ffffff" stroke-width="0.9" />
</g>
<rect x="524" y="113" width="10" height="1" fill="#ffffff"/>
<text x="524.5" y="112.7" fill="#ffffff" font-size="5" textLength="9.5" lengthAdjust="spacingAndGlyphs" font-weight="bold" stroke="#fff" stroke-width="0.15">KZ-1</text>
<rect x="513" y="206" width="10" height="1" fill="#ffff00"/>
<rect x="514" y="198" width="8" height="8" fill="#ffffff"/>
<rect x="515" y="199" width="6" height="6" fill="#666666"/>
<g shape-rendering="auto">
<line x1="521.5" y1="198" x2="524.5" y2="191.5" stroke="#ffffff" stroke-width="0.9" />
</g>
<rect x="524" y="194" width="10" height="1" fill="#ffffff"/>
<text x="524.5" y="193.7" fill="#ffffff" font-size="5" textLength="9.5" lengthAdjust="spacingAndGlyphs" font-weight="bold" stroke="#fff" stroke-width="0.15">KZ-1</text>
<rect x="513" y="236" width="2" height="9" fill="#ffff00"/>
<rect x="513" y="244" width="10" height="1" fill="#ffff00"/>
<rect x="514" y="236" width="8" height="8" fill="#ffffff"/>
<rect x="515" y="237" width="6" height="6" fill="#666666"/>
<g shape-rendering="auto">
<line x1="521.5" y1="236" x2="524.5" y2="229.5" stroke="#ffffff" stroke-width="0.9" />
</g>
<rect x="524" y="232" width="10" height="1" fill="#ffffff"/>
<text x="524.5" y="231.7" fill="#ffffff" font-size="5" textLength="9.5" lengthAdjust="spacingAndGlyphs" font-weight="bold" stroke="#fff" stroke-width="0.15">KZ-1</text>
<rect x="514" y="316" width="8" height="8" fill="#ffffff"/>
<rect x="515" y="317" width="6" height="6" fill="#666666"/>
<g shape-rendering="auto">
<line x1="521.5" y1="316" x2="524.5" y2="309.5" stroke="#ffffff" stroke-width="0.9" />
</g>
<rect x="524" y="312" width="10" height="1" fill="#ffffff"/>
<text x="524.5" y="311.7" fill="#ffffff" font-size="5" textLength="9.5" lengthAdjust="spacingAndGlyphs" font-weight="bold" stroke="#fff" stroke-width="0.15">KZ-1</text>
<rect x="566" y="117" width="2" height="9" fill="#ffff00"/>
<rect x="559" y="117" width="8" height="8" fill="#ffffff"/>
<rect x="560" y="118" width="6" height="6" fill="#666666"/>
<g shape-rendering="auto">
<line x1="566.5" y1="117" x2="569.5" y2="110.5" stroke="#ffffff" stroke-width="0.9" />
</g>
<rect x="569" y="113" width="10" height="1" fill="#ffffff"/>
<text x="569.5" y="112.7" fill="#ffffff" font-size="5" textLength="9.5" lengthAdjust="spacingAndGlyphs" font-weight="bold" stroke="#fff" stroke-width="0.15">KZ-1</text>
<rect x="558" y="206" width="10" height="1" fill="#ffff00"/>
<rect x="559" y="198" width="8" height="8" fill="#ffffff"/>
<rect x="560" y="199" width="6" height="6" fill="#666666"/>
<g shape-rendering="auto">
<line x1="566.5" y1="198" x2="569.5" y2="191.5" stroke="#ffffff" stroke-width="0.9" />
</g>
<rect x="569" y="194" width="10" height="1" fill="#ffffff"/>
<text x="569.5" y="193.7" fill="#ffffff" font-size="5" textLength="9.5" lengthAdjust="spacingAndGlyphs" font-weight="bold" stroke="#fff" stroke-width="0.15">KZ-1</text>
<rect x="558" y="236" width="2" height="9" fill="#ffff00"/>
<rect x="558" y="244" width="10" height="1" fill="#ffff00"/>
<rect x="559" y="236" width="8" height="8" fill="#ffffff"/>
<rect x="560" y="237" width="6" height="6" fill="#666666"/>
<g shape-rendering="auto">
<line x1="566.5" y1="236" x2="569.5" y2="229.5" stroke="#ffffff" stroke-width="0.9" />
</g>
<rect x="569" y="232" width="10" height="1" fill="#ffffff"/>
<text x="569.5" y="231.7" fill="#ffffff" font-size="5" textLength="9.5" lengthAdjust="spacingAndGlyphs" font-weight="bold" stroke="#fff" stroke-width="0.15">KZ-1</text>
<rect x="566" y="316" width="2" height="9" fill="#ffff00"/>
<rect x="558" y="324" width="10" height="1" fill="#ffff00"/>
<rect x="559" y="316" width="8" height="8" fill="#ffffff"/>
<rect x="560" y="317" width="6" height="6" fill="#666666"/>
<g shape-rendering="auto">
<line x1="566.5" y1="316" x2="569.5" y2="309.5" stroke="#ffffff" stroke-width="0.9" />
</g>
<rect x="569" y="312" width="10" height="1" fill="#ffffff"/>
<text x="569.5" y="311.7" fill="#ffffff" font-size="5" textLength="9.5" lengthAdjust="spacingAndGlyphs" font-weight="bold" stroke="#fff" stroke-width="0.15">KZ-1</text>
<rect x="649" y="117" width="8" height="8" fill="#ffffff"/>
<rect x="650" y="118" width="6" height="6" fill="#666666"/>
<g shape-rendering="auto">
<line x1="656.5" y1="117" x2="659.5" y2="110.5" stroke="#ffffff" stroke-width="0.9" />
</g>
<rect x="659" y="113" width="10" height="1" fill="#ffffff"/>
<text x="659.5" y="112.7" fill="#ffffff" font-size="5" textLength="9.5" lengthAdjust="spacingAndGlyphs" font-weight="bold" stroke="#fff" stroke-width="0.15">KZ-1</text>
<rect x="648" y="198" width="2" height="9" fill="#ffff00"/>
<rect x="648" y="206" width="10" height="1" fill="#ffff00"/>
<rect x="649" y="198" width="8" height="8" fill="#ffffff"/>
<rect x="650" y="199" width="6" height="6" fill="#666666"/>
<g shape-rendering="auto">
<line x1="656.5" y1="198" x2="659.5" y2="191.5" stroke="#ffffff" stroke-width="0.9" />
</g>
<rect x="659" y="194" width="10" height="1" fill="#ffffff"/>
<text x="659.5" y="193.7" fill="#ffffff" font-size="5" textLength="9.5" lengthAdjust="spacingAndGlyphs" font-weight="bold" stroke="#fff" stroke-width="0.15">KZ-1</text>
<rect x="648" y="236" width="2" height="9" fill="#ffff00"/>
<rect x="648" y="244" width="10" height="1" fill="#ffff00"/>
<rect x="649" y="236" width="8" height="8" fill="#ffffff"/>
<rect x="650" y="237" width="6" height="6" fill="#666666"/>
<g shape-rendering="auto">
<line x1="656.5" y1="236" x2="659.5" y2="229.5" stroke="#ffffff" stroke-width="0.9" />
</g>
<rect x="659" y="232" width="10" height="1" fill="#ffffff"/>
<text x="659.5" y="231.7" fill="#ffffff" font-size="5" textLength="9.5" lengthAdjust="spacingAndGlyphs" font-weight="bold" stroke="#fff" stroke-width="0.15">KZ-1</text>
<rect x="649" y="316" width="8" height="8" fill="#ffffff"/>
<rect x="650" y="317" width="6" height="6" fill="#666666"/>
<g shape-rendering="auto">
<line x1="656.5" y1="316" x2="659.5" y2="309.5" stroke="#ffffff" stroke-width="0.9" />
</g>
<rect x="659" y="312" width="10" height="1" fill="#ffffff"/>
<text x="659.5" y="311.7" fill="#ffffff" font-size="5" textLength="9.5" lengthAdjust="spacingAndGlyphs" font-weight="bold" stroke="#fff" stroke-width="0.15">KZ-1</text>
<rect x="740" y="117" width="8" height="8" fill="#ffffff"/>
<rect x="741" y="118" width="6" height="6" fill="#666666"/>
<g shape-rendering="auto">
<line x1="747.5" y1="117" x2="750.5" y2="110.5" stroke="#ffffff" stroke-width="0.9" />
</g>
<rect x="750" y="113" width="10" height="1" fill="#ffffff"/>
<text x="750.5" y="112.7" fill="#ffffff" font-size="5" textLength="9.5" lengthAdjust="spacingAndGlyphs" font-weight="bold" stroke="#fff" stroke-width="0.15">KZ-1</text>
<rect x="747" y="198" width="2" height="9" fill="#ffff00"/>
<rect x="739" y="206" width="10" height="1" fill="#ffff00"/>
<rect x="740" y="198" width="8" height="8" fill="#ffffff"/>
<rect x="741" y="199" width="6" height="6" fill="#666666"/>
<g shape-rendering="auto">
<line x1="747.5" y1="198" x2="750.5" y2="191.5" stroke="#ffffff" stroke-width="0.9" />
</g>
<rect x="750" y="194" width="10" height="1" fill="#ffffff"/>
<text x="750.5" y="193.7" fill="#ffffff" font-size="5" textLength="9.5" lengthAdjust="spacingAndGlyphs" font-weight="bold" stroke="#fff" stroke-width="0.15">KZ-1</text>
<rect x="747" y="236" width="2" height="9" fill="#ffff00"/>
<rect x="739" y="244" width="10" height="1" fill="#ffff00"/>
<rect x="740" y="236" width="8" height="8" fill="#ffffff"/>
<rect x="741" y="237" width="6" height="6" fill="#666666"/>
<g shape-rendering="auto">
<line x1="747.5" y1="236" x2="750.5" y2="229.5" stroke="#ffffff" stroke-width="0.9" />
</g>
<rect x="750" y="232" width="10" height="1" fill="#ffffff"/>
<text x="750.5" y="231.7" fill="#ffffff" font-size="5" textLength="9.5" lengthAdjust="spacingAndGlyphs" font-weight="bold" stroke="#fff" stroke-width="0.15">KZ-1</text>
<rect x="740" y="316" width="8" height="8" fill="#ffffff"/>
<rect x="741" y="317" width="6" height="6" fill="#666666"/>
<g shape-rendering="auto">
<line x1="747.5" y1="316" x2="750.5" y2="309.5" stroke="#ffffff" stroke-width="0.9" />
</g>
<rect x="750" y="312" width="10" height="1" fill="#ffffff"/>
<text x="750.5" y="311.7" fill="#ffffff" font-size="5" textLength="9.5" lengthAdjust="spacingAndGlyphs" font-weight="bold" stroke="#fff" stroke-width="0.15">KZ-1</text>
<rect x="784" y="117" width="2" height="9" fill="#ffff00"/>
<rect x="785" y="117" width="8" height="8" fill="#ffffff"/>
<rect x="786" y="118" width="6" height="6" fill="#666666"/>
<g shape-rendering="auto">
<line x1="792.5" y1="117" x2="795.5" y2="110.5" stroke="#ffffff" stroke-width="0.9" />
</g>
<rect x="795" y="113" width="10" height="1" fill="#ffffff"/>
<text x="795.5" y="112.7" fill="#ffffff" font-size="5" textLength="9.5" lengthAdjust="spacingAndGlyphs" font-weight="bold" stroke="#fff" stroke-width="0.15">KZ-1</text>
<rect x="792" y="198" width="2" height="9" fill="#ffff00"/>
<rect x="784" y="206" width="10" height="1" fill="#ffff00"/>
<rect x="785" y="198" width="8" height="8" fill="#ffffff"/>
<rect x="786" y="199" width="6" height="6" fill="#666666"/>
<g shape-rendering="auto">
<line x1="792.5" y1="198" x2="795.5" y2="191.5" stroke="#ffffff" stroke-width="0.9" />
</g>
<rect x="795" y="194" width="10" height="1" fill="#ffffff"/>
<text x="795.5" y="193.7" fill="#ffffff" font-size="5" textLength="9.5" lengthAdjust="spacingAndGlyphs" font-weight="bold" stroke="#fff" stroke-width="0.15">KZ-1</text>
<rect x="792" y="236" width="2" height="9" fill="#ffff00"/>
<rect x="784" y="244" width="10" height="1" fill="#ffff00"/>
<rect x="785" y="236" width="8" height="8" fill="#ffffff"/>
<rect x="786" y="237" width="6" height="6" fill="#666666"/>
<g shape-rendering="auto">
<line x1="792.5" y1="236" x2="795.5" y2="229.5" stroke="#ffffff" stroke-width="0.9" />
</g>
<rect x="795" y="232" width="10" height="1" fill="#ffffff"/>
<text x="795.5" y="231.7" fill="#ffffff" font-size="5" textLength="9.5" lengthAdjust="spacingAndGlyphs" font-weight="bold" stroke="#fff" stroke-width="0.15">KZ-1</text>
<rect x="784" y="316" width="2" height="9" fill="#ffff00"/>
<rect x="784" y="324" width="10" height="1" fill="#ffff00"/>
<rect x="785" y="316" width="8" height="8" fill="#ffffff"/>
<rect x="786" y="317" width="6" height="6" fill="#666666"/>
<g shape-rendering="auto">
<line x1="792.5" y1="316" x2="795.5" y2="309.5" stroke="#ffffff" stroke-width="0.9" />
</g>
<rect x="795" y="312" width="10" height="1" fill="#ffffff"/>
<text x="795.5" y="311.7" fill="#ffffff" font-size="5" textLength="9.5" lengthAdjust="spacingAndGlyphs" font-weight="bold" stroke="#fff" stroke-width="0.15">KZ-1</text>
<rect x="875" y="117" width="8" height="8" fill="#ffffff"/>
<rect x="876" y="118" width="6" height="6" fill="#666666"/>
<g shape-rendering="auto">
<line x1="882.5" y1="117" x2="885.5" y2="110.5" stroke="#ffffff" stroke-width="0.9" />
</g>
<rect x="885" y="113" width="10" height="1" fill="#ffffff"/>
<text x="885.5" y="112.7" fill="#ffffff" font-size="5" textLength="9.5" lengthAdjust="spacingAndGlyphs" font-weight="bold" stroke="#fff" stroke-width="0.15">KZ-1</text>
<rect x="874" y="206" width="10" height="1" fill="#ffff00"/>
<rect x="875" y="198" width="8" height="8" fill="#ffffff"/>
<rect x="876" y="199" width="6" height="6" fill="#666666"/>
<g shape-rendering="auto">
<line x1="882.5" y1="198" x2="885.5" y2="191.5" stroke="#ffffff" stroke-width="0.9" />
</g>
<rect x="885" y="194" width="10" height="1" fill="#ffffff"/>
<text x="885.5" y="193.7" fill="#ffffff" font-size="5" textLength="9.5" lengthAdjust="spacingAndGlyphs" font-weight="bold" stroke="#fff" stroke-width="0.15">KZ-1</text>
<rect x="874" y="244" width="10" height="1" fill="#ffff00"/>
<rect x="875" y="236" width="8" height="8" fill="#ffffff"/>
<rect x="876" y="237" width="6" height="6" fill="#666666"/>
<g shape-rendering="auto">
<line x1="882.5" y1="236" x2="885.5" y2="229.5" stroke="#ffffff" stroke-width="0.9" />
</g>
<rect x="885" y="232" width="10" height="1" fill="#ffffff"/>
<text x="885.5" y="231.7" fill="#ffffff" font-size="5" textLength="9.5" lengthAdjust="spacingAndGlyphs" font-weight="bold" stroke="#fff" stroke-width="0.15">KZ-1</text>
<rect x="875" y="316" width="8" height="8" fill="#ffffff"/>
<rect x="876" y="317" width="6" height="6" fill="#666666"/>
<g shape-rendering="auto">
<line x1="882.5" y1="316" x2="885.5" y2="309.5" stroke="#ffffff" stroke-width="0.9" />
</g>
<rect x="885" y="312" width="10" height="1" fill="#ffffff"/>
<text x="885.5" y="311.7" fill="#ffffff" font-size="5" textLength="9.5" lengthAdjust="spacingAndGlyphs" font-weight="bold" stroke="#fff" stroke-width="0.15">KZ-1</text>
<rect x="201" y="85" width="678" height="1" fill="#00ff00"/>
<rect x="201" y="95" width="678" height="1" fill="#00ff00"/>
<rect x="201" y="76" width="1" height="20" fill="#00ff00"/>
<circle cx="201.5" cy="70.5" r="4.7" fill="none" stroke="#00ff00" shape-rendering="auto"/>
<text x="201.5" y="73.2" fill="#00ff00" font-size="7" text-anchor="middle" >1</text>
<path d="M199.5 97.5 L203.5 93.5" stroke="#00ff00" shape-rendering="auto"/>
<text x="224.0" y="95" fill="#00ff00" font-size="5.8" text-anchor="middle" textLength="10.5" lengthAdjust="spacingAndGlyphs" font-weight="bold" stroke="#00ff00" stroke-width="0.35">3600</text>
<rect x="246" y="76" width="1" height="20" fill="#00ff00"/>
<circle cx="246.5" cy="70.5" r="4.7" fill="none" stroke="#00ff00" shape-rendering="auto"/>
<text x="246.5" y="73.2" fill="#00ff00" font-size="7" text-anchor="middle" >2</text>
<path d="M244.5 97.5 L248.5 93.5" stroke="#00ff00" shape-rendering="auto"/>
<text x="269.5" y="95" fill="#00ff00" font-size="5.8" text-anchor="middle" textLength="10.5" lengthAdjust="spacingAndGlyphs" font-weight="bold" stroke="#00ff00" stroke-width="0.35">3600</text>
<rect x="292" y="76" width="1" height="20" fill="#00ff00"/>
<circle cx="292.5" cy="70.5" r="4.7" fill="none" stroke="#00ff00" shape-rendering="auto"/>
<text x="292.5" y="73.2" fill="#00ff00" font-size="7" text-anchor="middle" >3</text>
<path d="M290.5 97.5 L294.5 93.5" stroke="#00ff00" shape-rendering="auto"/>
<text x="315.0" y="95" fill="#00ff00" font-size="5.8" text-anchor="middle" textLength="10.5" lengthAdjust="spacingAndGlyphs" font-weight="bold" stroke="#00ff00" stroke-width="0.35">3600</text>
<rect x="337" y="76" width="1" height="20" fill="#00ff00"/>
<circle cx="337.5" cy="70.5" r="4.7" fill="none" stroke="#00ff00" shape-rendering="auto"/>
<text x="337.5" y="73.2" fill="#00ff00" font-size="7" text-anchor="middle" >4</text>
<path d="M335.5 97.5 L339.5 93.5" stroke="#00ff00" shape-rendering="auto"/>
<text x="360.0" y="95" fill="#00ff00" font-size="5.8" text-anchor="middle" textLength="10.5" lengthAdjust="spacingAndGlyphs" font-weight="bold" stroke="#00ff00" stroke-width="0.35">3600</text>
<rect x="382" y="76" width="1" height="20" fill="#00ff00"/>
<circle cx="382.5" cy="70.5" r="4.7" fill="none" stroke="#00ff00" shape-rendering="auto"/>
<text x="382.5" y="73.2" fill="#00ff00" font-size="7" text-anchor="middle" >5</text>
<path d="M380.5 97.5 L384.5 93.5" stroke="#00ff00" shape-rendering="auto"/>
<text x="405.0" y="95" fill="#00ff00" font-size="5.8" text-anchor="middle" textLength="10.5" lengthAdjust="spacingAndGlyphs" font-weight="bold" stroke="#00ff00" stroke-width="0.35">3600</text>
<rect x="427" y="76" width="1" height="20" fill="#00ff00"/>
<circle cx="427.5" cy="70.5" r="4.7" fill="none" stroke="#00ff00" shape-rendering="auto"/>
<text x="427.5" y="73.2" fill="#00ff00" font-size="7" text-anchor="middle" >6</text>
<path d="M425.5 97.5 L429.5 93.5" stroke="#00ff00" shape-rendering="auto"/>
<text x="450.0" y="95" fill="#00ff00" font-size="5.8" text-anchor="middle" textLength="10.5" lengthAdjust="spacingAndGlyphs" font-weight="bold" stroke="#00ff00" stroke-width="0.35">3600</text>
<rect x="472" y="76" width="1" height="20" fill="#00ff00"/>
<circle cx="472.5" cy="70.5" r="4.7" fill="none" stroke="#00ff00" shape-rendering="auto"/>
<text x="472.5" y="73.2" fill="#00ff00" font-size="7" text-anchor="middle" >7</text>
<path d="M470.5 97.5 L474.5 93.5" stroke="#00ff00" shape-rendering="auto"/>
<text x="495.0" y="95" fill="#00ff00" font-size="5.8" text-anchor="middle" textLength="10.5" lengthAdjust="spacingAndGlyphs" font-weight="bold" stroke="#00ff00" stroke-width="0.35">3600</text>
<rect x="517" y="76" width="1" height="20" fill="#00ff00"/>
<circle cx="517.5" cy="70.5" r="4.7" fill="none" stroke="#00ff00" shape-rendering="auto"/>
<text x="517.5" y="73.2" fill="#00ff00" font-size="7" text-anchor="middle" >8</text>
<path d="M515.5 97.5 L519.5 93.5" stroke="#00ff00" shape-rendering="auto"/>
<text x="540.0" y="95" fill="#00ff00" font-size="5.8" text-anchor="middle" textLength="10.5" lengthAdjust="spacingAndGlyphs" font-weight="bold" stroke="#00ff00" stroke-width="0.35">3600</text>
<rect x="562" y="76" width="1" height="20" fill="#00ff00"/>
<circle cx="562.5" cy="70.5" r="4.7" fill="none" stroke="#00ff00" shape-rendering="auto"/>
<text x="562.5" y="73.2" fill="#00ff00" font-size="7" text-anchor="middle" >9</text>
<path d="M560.5 97.5 L564.5 93.5" stroke="#00ff00" shape-rendering="auto"/>
<text x="585.0" y="95" fill="#00ff00" font-size="5.8" text-anchor="middle" textLength="10.5" lengthAdjust="spacingAndGlyphs" font-weight="bold" stroke="#00ff00" stroke-width="0.35">3600</text>
<rect x="607" y="76" width="1" height="20" fill="#00ff00"/>
<circle cx="607.5" cy="70.5" r="4.7" fill="none" stroke="#00ff00" shape-rendering="auto"/>
<text x="607.5" y="73.0" fill="#00ff00" font-size="6.8" text-anchor="middle" textLength="7.4" lengthAdjust="spacingAndGlyphs" font-weight="bold" >10</text>
<path d="M605.5 97.5 L609.5 93.5" stroke="#00ff00" shape-rendering="auto"/>
<text x="630.0" y="95" fill="#00ff00" font-size="5.8" text-anchor="middle" textLength="10.5" lengthAdjust="spacingAndGlyphs" font-weight="bold" stroke="#00ff00" stroke-width="0.35">3600</text>
<rect x="652" y="76" width="1" height="20" fill="#00ff00"/>
<circle cx="652.5" cy="70.5" r="4.7" fill="none" stroke="#00ff00" shape-rendering="auto"/>
<text x="652.5" y="73.0" fill="#00ff00" font-size="6.8" text-anchor="middle" textLength="7.4" lengthAdjust="spacingAndGlyphs" font-weight="bold" >11</text>
<path d="M650.5 97.5 L654.5 93.5" stroke="#00ff00" shape-rendering="auto"/>
<text x="675.5" y="95" fill="#00ff00" font-size="5.8" text-anchor="middle" textLength="10.5" lengthAdjust="spacingAndGlyphs" font-weight="bold" stroke="#00ff00" stroke-width="0.35">3600</text>
<rect x="698" y="76" width="1" height="20" fill="#00ff00"/>
<circle cx="698.5" cy="70.5" r="4.7" fill="none" stroke="#00ff00" shape-rendering="auto"/>
<text x="698.5" y="73.0" fill="#00ff00" font-size="6.8" text-anchor="middle" textLength="7.4" lengthAdjust="spacingAndGlyphs" font-weight="bold" >12</text>
<path d="M696.5 97.5 L700.5 93.5" stroke="#00ff00" shape-rendering="auto"/>
<text x="721.0" y="95" fill="#00ff00" font-size="5.8" text-anchor="middle" textLength="10.5" lengthAdjust="spacingAndGlyphs" font-weight="bold" stroke="#00ff00" stroke-width="0.35">3600</text>
<rect x="743" y="76" width="1" height="20" fill="#00ff00"/>
<circle cx="743.5" cy="70.5" r="4.7" fill="none" stroke="#00ff00" shape-rendering="auto"/>
<text x="743.5" y="73.0" fill="#00ff00" font-size="6.8" text-anchor="middle" textLength="7.4" lengthAdjust="spacingAndGlyphs" font-weight="bold" >13</text>
<path d="M741.5 97.5 L745.5 93.5" stroke="#00ff00" shape-rendering="auto"/>
<text x="766.0" y="95" fill="#00ff00" font-size="5.8" text-anchor="middle" textLength="10.5" lengthAdjust="spacingAndGlyphs" font-weight="bold" stroke="#00ff00" stroke-width="0.35">3600</text>
<rect x="788" y="76" width="1" height="20" fill="#00ff00"/>
<circle cx="788.5" cy="70.5" r="4.7" fill="none" stroke="#00ff00" shape-rendering="auto"/>
<text x="788.5" y="73.0" fill="#00ff00" font-size="6.8" text-anchor="middle" textLength="7.4" lengthAdjust="spacingAndGlyphs" font-weight="bold" >14</text>
<path d="M786.5 97.5 L790.5 93.5" stroke="#00ff00" shape-rendering="auto"/>
<text x="811.0" y="95" fill="#00ff00" font-size="5.8" text-anchor="middle" textLength="10.5" lengthAdjust="spacingAndGlyphs" font-weight="bold" stroke="#00ff00" stroke-width="0.35">3600</text>
<rect x="833" y="76" width="1" height="20" fill="#00ff00"/>
<circle cx="833.5" cy="70.5" r="4.7" fill="none" stroke="#00ff00" shape-rendering="auto"/>
<text x="833.5" y="73.0" fill="#00ff00" font-size="6.8" text-anchor="middle" textLength="7.4" lengthAdjust="spacingAndGlyphs" font-weight="bold" >15</text>
<path d="M831.5 97.5 L835.5 93.5" stroke="#00ff00" shape-rendering="auto"/>
<text x="856.0" y="95" fill="#00ff00" font-size="5.8" text-anchor="middle" textLength="10.5" lengthAdjust="spacingAndGlyphs" font-weight="bold" stroke="#00ff00" stroke-width="0.35">3600</text>
<rect x="878" y="76" width="1" height="20" fill="#00ff00"/>
<circle cx="878.5" cy="70.5" r="4.7" fill="none" stroke="#00ff00" shape-rendering="auto"/>
<text x="878.5" y="73.0" fill="#00ff00" font-size="6.8" text-anchor="middle" textLength="7.4" lengthAdjust="spacingAndGlyphs" font-weight="bold" >16</text>
<path d="M876.5 97.5 L880.5 93.5" stroke="#00ff00" shape-rendering="auto"/>
<text x="540" y="85" fill="#00ff00" font-size="5.8" text-anchor="middle" textLength="12.5" lengthAdjust="spacingAndGlyphs" font-weight="bold" stroke="#00ff00" stroke-width="0.35">54000</text>
<path d="M199.5 87.5 l4 -4 M876.5 87.5 l4 -4" stroke="#00ff00" shape-rendering="auto"/>
<rect x="201" y="345" width="678" height="1" fill="#00ff00"/>
<rect x="201" y="355" width="678" height="1" fill="#00ff00"/>
<rect x="201" y="345" width="1" height="20" fill="#00ff00"/>
<circle cx="201.5" cy="369.8" r="4.7" fill="none" stroke="#00ff00" shape-rendering="auto"/>
<text x="201.5" y="372.5" fill="#00ff00" font-size="7" text-anchor="middle" >1</text>
<path d="M199.5 347.5 L203.5 343.5" stroke="#00ff00" shape-rendering="auto"/>
<text x="224.0" y="345" fill="#00ff00" font-size="5.8" text-anchor="middle" textLength="10.5" lengthAdjust="spacingAndGlyphs" font-weight="bold" stroke="#00ff00" stroke-width="0.35">3600</text>
<rect x="246" y="345" width="1" height="20" fill="#00ff00"/>
<circle cx="246.5" cy="369.8" r="4.7" fill="none" stroke="#00ff00" shape-rendering="auto"/>
<text x="246.5" y="372.5" fill="#00ff00" font-size="7" text-anchor="middle" >2</text>
<path d="M244.5 347.5 L248.5 343.5" stroke="#00ff00" shape-rendering="auto"/>
<text x="269.5" y="345" fill="#00ff00" font-size="5.8" text-anchor="middle" textLength="10.5" lengthAdjust="spacingAndGlyphs" font-weight="bold" stroke="#00ff00" stroke-width="0.35">3600</text>
<rect x="292" y="345" width="1" height="20" fill="#00ff00"/>
<circle cx="292.5" cy="369.8" r="4.7" fill="none" stroke="#00ff00" shape-rendering="auto"/>
<text x="292.5" y="372.5" fill="#00ff00" font-size="7" text-anchor="middle" >3</text>
<path d="M290.5 347.5 L294.5 343.5" stroke="#00ff00" shape-rendering="auto"/>
<text x="315.0" y="345" fill="#00ff00" font-size="5.8" text-anchor="middle" textLength="10.5" lengthAdjust="spacingAndGlyphs" font-weight="bold" stroke="#00ff00" stroke-width="0.35">3600</text>
<rect x="337" y="345" width="1" height="20" fill="#00ff00"/>
<circle cx="337.5" cy="369.8" r="4.7" fill="none" stroke="#00ff00" shape-rendering="auto"/>
<text x="337.5" y="372.5" fill="#00ff00" font-size="7" text-anchor="middle" >4</text>
<path d="M335.5 347.5 L339.5 343.5" stroke="#00ff00" shape-rendering="auto"/>
<text x="360.0" y="345" fill="#00ff00" font-size="5.8" text-anchor="middle" textLength="10.5" lengthAdjust="spacingAndGlyphs" font-weight="bold" stroke="#00ff00" stroke-width="0.35">3600</text>
<rect x="382" y="345" width="1" height="20" fill="#00ff00"/>
<circle cx="382.5" cy="369.8" r="4.7" fill="none" stroke="#00ff00" shape-rendering="auto"/>
<text x="382.5" y="372.5" fill="#00ff00" font-size="7" text-anchor="middle" >5</text>
<path d="M380.5 347.5 L384.5 343.5" stroke="#00ff00" shape-rendering="auto"/>
<text x="405.0" y="345" fill="#00ff00" font-size="5.8" text-anchor="middle" textLength="10.5" lengthAdjust="spacingAndGlyphs" font-weight="bold" stroke="#00ff00" stroke-width="0.35">3600</text>
<rect x="427" y="345" width="1" height="20" fill="#00ff00"/>
<circle cx="427.5" cy="369.8" r="4.7" fill="none" stroke="#00ff00" shape-rendering="auto"/>
<text x="427.5" y="372.5" fill="#00ff00" font-size="7" text-anchor="middle" >6</text>
<path d="M425.5 347.5 L429.5 343.5" stroke="#00ff00" shape-rendering="auto"/>
<text x="450.0" y="345" fill="#00ff00" font-size="5.8" text-anchor="middle" textLength="10.5" lengthAdjust="spacingAndGlyphs" font-weight="bold" stroke="#00ff00" stroke-width="0.35">3600</text>
<rect x="472" y="345" width="1" height="20" fill="#00ff00"/>
<circle cx="472.5" cy="369.8" r="4.7" fill="none" stroke="#00ff00" shape-rendering="auto"/>
<text x="472.5" y="372.5" fill="#00ff00" font-size="7" text-anchor="middle" >7</text>
<path d="M470.5 347.5 L474.5 343.5" stroke="#00ff00" shape-rendering="auto"/>
<text x="495.0" y="345" fill="#00ff00" font-size="5.8" text-anchor="middle" textLength="10.5" lengthAdjust="spacingAndGlyphs" font-weight="bold" stroke="#00ff00" stroke-width="0.35">3600</text>
<rect x="517" y="345" width="1" height="20" fill="#00ff00"/>
<circle cx="517.5" cy="369.8" r="4.7" fill="none" stroke="#00ff00" shape-rendering="auto"/>
<text x="517.5" y="372.5" fill="#00ff00" font-size="7" text-anchor="middle" >8</text>
<path d="M515.5 347.5 L519.5 343.5" stroke="#00ff00" shape-rendering="auto"/>
<text x="540.0" y="345" fill="#00ff00" font-size="5.8" text-anchor="middle" textLength="10.5" lengthAdjust="spacingAndGlyphs" font-weight="bold" stroke="#00ff00" stroke-width="0.35">3600</text>
<rect x="562" y="345" width="1" height="20" fill="#00ff00"/>
<circle cx="562.5" cy="369.8" r="4.7" fill="none" stroke="#00ff00" shape-rendering="auto"/>
<text x="562.5" y="372.5" fill="#00ff00" font-size="7" text-anchor="middle" >9</text>
<path d="M560.5 347.5 L564.5 343.5" stroke="#00ff00" shape-rendering="auto"/>
<text x="585.0" y="345" fill="#00ff00" font-size="5.8" text-anchor="middle" textLength="10.5" lengthAdjust="spacingAndGlyphs" font-weight="bold" stroke="#00ff00" stroke-width="0.35">3600</text>
<rect x="607" y="345" width="1" height="20" fill="#00ff00"/>
<circle cx="607.5" cy="369.8" r="4.7" fill="none" stroke="#00ff00" shape-rendering="auto"/>
<text x="607.5" y="372.3" fill="#00ff00" font-size="6.8" text-anchor="middle" textLength="7.4" lengthAdjust="spacingAndGlyphs" font-weight="bold" >10</text>
<path d="M605.5 347.5 L609.5 343.5" stroke="#00ff00" shape-rendering="auto"/>
<text x="630.0" y="345" fill="#00ff00" font-size="5.8" text-anchor="middle" textLength="10.5" lengthAdjust="spacingAndGlyphs" font-weight="bold" stroke="#00ff00" stroke-width="0.35">3600</text>
<rect x="652" y="345" width="1" height="20" fill="#00ff00"/>
<circle cx="652.5" cy="369.8" r="4.7" fill="none" stroke="#00ff00" shape-rendering="auto"/>
<text x="652.5" y="372.3" fill="#00ff00" font-size="6.8" text-anchor="middle" textLength="7.4" lengthAdjust="spacingAndGlyphs" font-weight="bold" >11</text>
<path d="M650.5 347.5 L654.5 343.5" stroke="#00ff00" shape-rendering="auto"/>
<text x="675.5" y="345" fill="#00ff00" font-size="5.8" text-anchor="middle" textLength="10.5" lengthAdjust="spacingAndGlyphs" font-weight="bold" stroke="#00ff00" stroke-width="0.35">3600</text>
<rect x="698" y="345" width="1" height="20" fill="#00ff00"/>
<circle cx="698.5" cy="369.8" r="4.7" fill="none" stroke="#00ff00" shape-rendering="auto"/>
<text x="698.5" y="372.3" fill="#00ff00" font-size="6.8" text-anchor="middle" textLength="7.4" lengthAdjust="spacingAndGlyphs" font-weight="bold" >12</text>
<path d="M696.5 347.5 L700.5 343.5" stroke="#00ff00" shape-rendering="auto"/>
<text x="721.0" y="345" fill="#00ff00" font-size="5.8" text-anchor="middle" textLength="10.5" lengthAdjust="spacingAndGlyphs" font-weight="bold" stroke="#00ff00" stroke-width="0.35">3600</text>
<rect x="743" y="345" width="1" height="20" fill="#00ff00"/>
<circle cx="743.5" cy="369.8" r="4.7" fill="none" stroke="#00ff00" shape-rendering="auto"/>
<text x="743.5" y="372.3" fill="#00ff00" font-size="6.8" text-anchor="middle" textLength="7.4" lengthAdjust="spacingAndGlyphs" font-weight="bold" >13</text>
<path d="M741.5 347.5 L745.5 343.5" stroke="#00ff00" shape-rendering="auto"/>
<text x="766.0" y="345" fill="#00ff00" font-size="5.8" text-anchor="middle" textLength="10.5" lengthAdjust="spacingAndGlyphs" font-weight="bold" stroke="#00ff00" stroke-width="0.35">3600</text>
<rect x="788" y="345" width="1" height="20" fill="#00ff00"/>
<circle cx="788.5" cy="369.8" r="4.7" fill="none" stroke="#00ff00" shape-rendering="auto"/>
<text x="788.5" y="372.3" fill="#00ff00" font-size="6.8" text-anchor="middle" textLength="7.4" lengthAdjust="spacingAndGlyphs" font-weight="bold" >14</text>
<path d="M786.5 347.5 L790.5 343.5" stroke="#00ff00" shape-rendering="auto"/>
<text x="811.0" y="345" fill="#00ff00" font-size="5.8" text-anchor="middle" textLength="10.5" lengthAdjust="spacingAndGlyphs" font-weight="bold" stroke="#00ff00" stroke-width="0.35">3600</text>
<rect x="833" y="345" width="1" height="20" fill="#00ff00"/>
<circle cx="833.5" cy="369.8" r="4.7" fill="none" stroke="#00ff00" shape-rendering="auto"/>
<text x="833.5" y="372.3" fill="#00ff00" font-size="6.8" text-anchor="middle" textLength="7.4" lengthAdjust="spacingAndGlyphs" font-weight="bold" >15</text>
<path d="M831.5 347.5 L835.5 343.5" stroke="#00ff00" shape-rendering="auto"/>
<text x="856.0" y="345" fill="#00ff00" font-size="5.8" text-anchor="middle" textLength="10.5" lengthAdjust="spacingAndGlyphs" font-weight="bold" stroke="#00ff00" stroke-width="0.35">3600</text>
<rect x="878" y="345" width="1" height="20" fill="#00ff00"/>
<circle cx="878.5" cy="369.8" r="4.7" fill="none" stroke="#00ff00" shape-rendering="auto"/>
<text x="878.5" y="372.3" fill="#00ff00" font-size="6.8" text-anchor="middle" textLength="7.4" lengthAdjust="spacingAndGlyphs" font-weight="bold" >16</text>
<path d="M876.5 347.5 L880.5 343.5" stroke="#00ff00" shape-rendering="auto"/>
<text x="540" y="355" fill="#00ff00" font-size="5.8" text-anchor="middle" textLength="12.5" lengthAdjust="spacingAndGlyphs" font-weight="bold" stroke="#00ff00" stroke-width="0.35">54000</text>
<rect x="166" y="121" width="1" height="200" fill="#00ff00"/>
<rect x="176" y="121" width="1" height="200" fill="#00ff00"/>
<rect x="903" y="121" width="1" height="200" fill="#00ff00"/>
<rect x="913" y="121" width="1" height="200" fill="#00ff00"/>
<rect x="156" y="121" width="21" height="1" fill="#00ff00"/>
<circle cx="151.7" cy="121.5" r="4.7" fill="none" stroke="#00ff00" shape-rendering="auto"/>
<text x="151.7" y="124.2" fill="#00ff00" font-size="7" text-anchor="middle" >D</text>
<rect x="903" y="121" width="22" height="1" fill="#00ff00"/>
<circle cx="929" cy="121.5" r="4.7" fill="none" stroke="#00ff00" shape-rendering="auto"/>
<text x="929" y="124.2" fill="#00ff00" font-size="7" text-anchor="middle" >D</text>
<path d="M174.5 123.5 l4 -4 M901.5 123.5 l4 -4" stroke="#00ff00" shape-rendering="auto"/>
<rect x="156" y="203" width="21" height="1" fill="#00ff00"/>
<circle cx="151.7" cy="203.5" r="4.7" fill="none" stroke="#00ff00" shape-rendering="auto"/>
<text x="151.7" y="206.2" fill="#00ff00" font-size="7" text-anchor="middle" >C</text>
<rect x="903" y="203" width="22" height="1" fill="#00ff00"/>
<circle cx="929" cy="203.5" r="4.7" fill="none" stroke="#00ff00" shape-rendering="auto"/>
<text x="929" y="206.2" fill="#00ff00" font-size="7" text-anchor="middle" >C</text>
<path d="M174.5 205.5 l4 -4 M901.5 205.5 l4 -4" stroke="#00ff00" shape-rendering="auto"/>
<rect x="156" y="237" width="21" height="1" fill="#00ff00"/>
<circle cx="151.7" cy="237.5" r="4.7" fill="none" stroke="#00ff00" shape-rendering="auto"/>
<text x="151.7" y="240.2" fill="#00ff00" font-size="7" text-anchor="middle" >B</text>
<rect x="903" y="237" width="22" height="1" fill="#00ff00"/>
<circle cx="929" cy="237.5" r="4.7" fill="none" stroke="#00ff00" shape-rendering="auto"/>
<text x="929" y="240.2" fill="#00ff00" font-size="7" text-anchor="middle" >B</text>
<path d="M174.5 239.5 l4 -4 M901.5 239.5 l4 -4" stroke="#00ff00" shape-rendering="auto"/>
<rect x="156" y="320" width="21" height="1" fill="#00ff00"/>
<circle cx="151.7" cy="320.5" r="4.7" fill="none" stroke="#00ff00" shape-rendering="auto"/>
<text x="151.7" y="323.2" fill="#00ff00" font-size="7" text-anchor="middle" >A</text>
<rect x="903" y="320" width="22" height="1" fill="#00ff00"/>
<circle cx="929" cy="320.5" r="4.7" fill="none" stroke="#00ff00" shape-rendering="auto"/>
<text x="929" y="323.2" fill="#00ff00" font-size="7" text-anchor="middle" >A</text>
<path d="M174.5 322.5 l4 -4 M901.5 322.5 l4 -4" stroke="#00ff00" shape-rendering="auto"/>
<path d="M164.5 123.5 l4 -4 M164.5 322.5 l4 -4 M911.5 123.5 l4 -4 M911.5 322.5 l4 -4" stroke="#00ff00" shape-rendering="auto"/>
<text x="176" y="162" fill="#00ff00" font-size="5.8" text-anchor="middle" transform="rotate(-90 176 162)" textLength="10" lengthAdjust="spacingAndGlyphs" font-weight="bold" stroke="#00ff00" stroke-width="0.35">6600</text>
<text x="176" y="220" fill="#00ff00" font-size="5.8" text-anchor="middle" transform="rotate(-90 176 220)" textLength="10" lengthAdjust="spacingAndGlyphs" font-weight="bold" stroke="#00ff00" stroke-width="0.35">2700</text>
<text x="176" y="279" fill="#00ff00" font-size="5.8" text-anchor="middle" transform="rotate(-90 176 279)" textLength="10" lengthAdjust="spacingAndGlyphs" font-weight="bold" stroke="#00ff00" stroke-width="0.35">6600</text>
<text x="166" y="220" fill="#00ff00" font-size="5.8" text-anchor="middle" transform="rotate(-90 166 220)" textLength="12" lengthAdjust="spacingAndGlyphs" font-weight="bold" stroke="#00ff00" stroke-width="0.35">15900</text>
<text x="903" y="162" fill="#00ff00" font-size="5.8" text-anchor="middle" transform="rotate(-90 903 162)" textLength="10" lengthAdjust="spacingAndGlyphs" font-weight="bold" stroke="#00ff00" stroke-width="0.35">6600</text>
<text x="903" y="220" fill="#00ff00" font-size="5.8" text-anchor="middle" transform="rotate(-90 903 220)" textLength="10" lengthAdjust="spacingAndGlyphs" font-weight="bold" stroke="#00ff00" stroke-width="0.35">2700</text>
<text x="903" y="279" fill="#00ff00" font-size="5.8" text-anchor="middle" transform="rotate(-90 903 279)" textLength="10" lengthAdjust="spacingAndGlyphs" font-weight="bold" stroke="#00ff00" stroke-width="0.35">6600</text>
<text x="913" y="220" fill="#00ff00" font-size="5.8" text-anchor="middle" transform="rotate(-90 913 220)" textLength="12" lengthAdjust="spacingAndGlyphs" font-weight="bold" stroke="#00ff00" stroke-width="0.35">15900</text>
<text x="218.7" y="173" fill="#ffffff" font-size="10.3" textLength="16.3" lengthAdjust="spacingAndGlyphs" >LB1</text>
<text x="258.7" y="173" fill="#ffffff" font-size="10.3" textLength="16.5" lengthAdjust="spacingAndGlyphs" >LB1</text>
<text x="352.5" y="173" fill="#ffffff" font-size="10.3" textLength="16.0" lengthAdjust="spacingAndGlyphs" >LB1</text>
<text x="387.8" y="173" fill="#ffffff" font-size="10.3" textLength="16.0" lengthAdjust="spacingAndGlyphs" >LB1</text>
<text x="442.4" y="173" fill="#ffffff" font-size="10.3" textLength="16.3" lengthAdjust="spacingAndGlyphs" >LB1</text>
<text x="488.7" y="173" fill="#ffffff" font-size="10.3" textLength="16.3" lengthAdjust="spacingAndGlyphs" >LB1</text>
<text x="576.7" y="173" fill="#ffffff" font-size="10.3" textLength="16.0" lengthAdjust="spacingAndGlyphs" >LB1</text>
<text x="621.9" y="173" fill="#ffffff" font-size="10.3" textLength="16.0" lengthAdjust="spacingAndGlyphs" >LB1</text>
<text x="665.7" y="173" fill="#ffffff" font-size="10.3" textLength="16.1" lengthAdjust="spacingAndGlyphs" >LB1</text>
<text x="713.8" y="173" fill="#ffffff" font-size="10.3" textLength="16.5" lengthAdjust="spacingAndGlyphs" >LB1</text>
<text x="802.8" y="173" fill="#ffffff" font-size="10.3" textLength="16.3" lengthAdjust="spacingAndGlyphs" >LB1</text>
<text x="846.6" y="173" fill="#ffffff" font-size="10.3" textLength="16.5" lengthAdjust="spacingAndGlyphs" >LB1</text>
<text x="217.8" y="286" fill="#ffffff" font-size="10.3" textLength="15.7" lengthAdjust="spacingAndGlyphs" >LB1</text>
<text x="263.8" y="285" fill="#ffffff" font-size="10.3" textLength="15.5" lengthAdjust="spacingAndGlyphs" >LB1</text>
<text x="308.8" y="284" fill="#ffffff" font-size="10.3" textLength="18.9" lengthAdjust="spacingAndGlyphs" >LB4</text>
<text x="350.1" y="284" fill="#ffffff" font-size="10.3" textLength="16.0" lengthAdjust="spacingAndGlyphs" >LB1</text>
<text x="397.5" y="283" fill="#ffffff" font-size="10.3" textLength="15.8" lengthAdjust="spacingAndGlyphs" >LB1</text>
<text x="440.8" y="283" fill="#ffffff" font-size="10.3" textLength="16.4" lengthAdjust="spacingAndGlyphs" >LB1</text>
<text x="485.8" y="283" fill="#ffffff" font-size="10.3" textLength="16.5" lengthAdjust="spacingAndGlyphs" >LB1</text>
<text x="532.9" y="283" fill="#ffffff" font-size="10.3" textLength="18.1" lengthAdjust="spacingAndGlyphs" >LB4</text>
<text x="578.7" y="284" fill="#ffffff" font-size="10.3" textLength="16.1" lengthAdjust="spacingAndGlyphs" >LB1</text>
<text x="622" y="284" fill="#ffffff" font-size="10.3" textLength="16.5" lengthAdjust="spacingAndGlyphs" >LB1</text>
<text x="665.9" y="284" fill="#ffffff" font-size="10.3" textLength="16.5" lengthAdjust="spacingAndGlyphs" >LB1</text>
<text x="710.7" y="284" fill="#ffffff" font-size="10.3" textLength="16.5" lengthAdjust="spacingAndGlyphs" >LB1</text>
<text x="755.4" y="284" fill="#ffffff" font-size="10.3" textLength="19.2" lengthAdjust="spacingAndGlyphs" >LB4</text>
<text x="803.3" y="284" fill="#ffffff" font-size="10.3" textLength="16.5" lengthAdjust="spacingAndGlyphs" >LB1</text>
<text x="846.6" y="284" fill="#ffffff" font-size="10.3" textLength="16.6" lengthAdjust="spacingAndGlyphs" >LB1</text>
<text x="242" y="222.3" fill="#ffffff" font-size="10.3" textLength="18.3" lengthAdjust="spacingAndGlyphs" >LB2</text>
<text x="302" y="224" fill="#ffffff" font-size="10.3" textLength="18.4" lengthAdjust="spacingAndGlyphs" >LB3</text>
<text x="371.9" y="222" fill="#ffffff" font-size="10.3" textLength="18.3" lengthAdjust="spacingAndGlyphs" >LB2</text>
<text x="465.8" y="226" fill="#ffffff" font-size="10.3" textLength="18.4" lengthAdjust="spacingAndGlyphs" >LB2</text>
<text x="531.3" y="225" fill="#ffffff" font-size="10.3" textLength="18.6" lengthAdjust="spacingAndGlyphs" >LB3</text>
<text x="603.4" y="225" fill="#ffffff" font-size="10.3" textLength="18.1" lengthAdjust="spacingAndGlyphs" >LB2</text>
<text x="693.1" y="225.5" fill="#ffffff" font-size="10.3" textLength="17.9" lengthAdjust="spacingAndGlyphs" >LB2</text>
<text x="757" y="224.5" fill="#ffffff" font-size="10.3" textLength="18.4" lengthAdjust="spacingAndGlyphs" >LB3</text>
<text x="828.8" y="225.3" fill="#ffffff" font-size="10.3" textLength="17.6" lengthAdjust="spacingAndGlyphs" >LB2</text>
<text x="197.7" y="174.3" fill="#ffff00" font-size="7" transform="rotate(-90 197.7 174.3)" textLength="12.4" lengthAdjust="spacingAndGlyphs" font-weight="bold" >KL2</text>
<text x="197.7" y="275" fill="#ffff00" font-size="7" transform="rotate(-90 197.7 275)" textLength="12.4" lengthAdjust="spacingAndGlyphs" font-weight="bold" >KL2</text>
<text x="196.8" y="224.3" fill="#ffff00" font-size="9" transform="rotate(-90 196.8 224.3)" textLength="13" lengthAdjust="spacingAndGlyphs" >KL3</text>
<text x="242.8" y="174.3" fill="#ffff00" font-size="7" transform="rotate(-90 242.8 174.3)" textLength="7" lengthAdjust="spacingAndGlyphs" font-weight="bold" >L1</text>
<text x="242.8" y="275" fill="#ffff00" font-size="7" transform="rotate(-90 242.8 275)" textLength="7" lengthAdjust="spacingAndGlyphs" font-weight="bold" >L1</text>
<text x="287.9" y="174.3" fill="#ffff00" font-size="7" transform="rotate(-90 287.9 174.3)" textLength="12.4" lengthAdjust="spacingAndGlyphs" font-weight="bold" >KL2</text>
<text x="287.9" y="275" fill="#ffff00" font-size="7" transform="rotate(-90 287.9 275)" textLength="12.4" lengthAdjust="spacingAndGlyphs" font-weight="bold" >KL2</text>
<text x="287.1" y="224.3" fill="#ffff00" font-size="9" transform="rotate(-90 287.1 224.3)" textLength="13" lengthAdjust="spacingAndGlyphs" >KL3</text>
<text x="333.0" y="174.3" fill="#ffff00" font-size="7" transform="rotate(-90 333.0 174.3)" textLength="12.4" lengthAdjust="spacingAndGlyphs" font-weight="bold" >KL2</text>
<text x="333.0" y="275" fill="#ffff00" font-size="7" transform="rotate(-90 333.0 275)" textLength="12.4" lengthAdjust="spacingAndGlyphs" font-weight="bold" >KL2</text>
<text x="332.2" y="224.3" fill="#ffff00" font-size="9" transform="rotate(-90 332.2 224.3)" textLength="13" lengthAdjust="spacingAndGlyphs" >KL3</text>
<text x="378.1" y="174.3" fill="#ffff00" font-size="7" transform="rotate(-90 378.1 174.3)" textLength="7" lengthAdjust="spacingAndGlyphs" font-weight="bold" >L1</text>
<text x="378.1" y="275" fill="#ffff00" font-size="7" transform="rotate(-90 378.1 275)" textLength="7" lengthAdjust="spacingAndGlyphs" font-weight="bold" >L1</text>
<text x="423.2" y="174.3" fill="#ffff00" font-size="7" transform="rotate(-90 423.2 174.3)" textLength="12.4" lengthAdjust="spacingAndGlyphs" font-weight="bold" >KL2</text>
<text x="423.2" y="275" fill="#ffff00" font-size="7" transform="rotate(-90 423.2 275)" textLength="12.4" lengthAdjust="spacingAndGlyphs" font-weight="bold" >KL2</text>
<text x="422.4" y="224.3" fill="#ffff00" font-size="9" transform="rotate(-90 422.4 224.3)" textLength="13" lengthAdjust="spacingAndGlyphs" >KL3</text>
<text x="468.3" y="174.3" fill="#ffff00" font-size="7" transform="rotate(-90 468.3 174.3)" textLength="7" lengthAdjust="spacingAndGlyphs" font-weight="bold" >L1</text>
<text x="468.3" y="275" fill="#ffff00" font-size="7" transform="rotate(-90 468.3 275)" textLength="7" lengthAdjust="spacingAndGlyphs" font-weight="bold" >L1</text>
<text x="513.4" y="174.3" fill="#ffff00" font-size="7" transform="rotate(-90 513.4 174.3)" textLength="12.4" lengthAdjust="spacingAndGlyphs" font-weight="bold" >KL2</text>
<text x="513.4" y="275" fill="#ffff00" font-size="7" transform="rotate(-90 513.4 275)" textLength="12.4" lengthAdjust="spacingAndGlyphs" font-weight="bold" >KL2</text>
<text x="512.6" y="224.3" fill="#ffff00" font-size="9" transform="rotate(-90 512.6 224.3)" textLength="13" lengthAdjust="spacingAndGlyphs" >KL3</text>
<text x="558.5" y="174.3" fill="#ffff00" font-size="7" transform="rotate(-90 558.5 174.3)" textLength="12.4" lengthAdjust="spacingAndGlyphs" font-weight="bold" >KL2</text>
<text x="558.5" y="275" fill="#ffff00" font-size="7" transform="rotate(-90 558.5 275)" textLength="12.4" lengthAdjust="spacingAndGlyphs" font-weight="bold" >KL2</text>
<text x="557.7" y="224.3" fill="#ffff00" font-size="9" transform="rotate(-90 557.7 224.3)" textLength="13" lengthAdjust="spacingAndGlyphs" >KL3</text>
<text x="603.6" y="174.3" fill="#ffff00" font-size="7" transform="rotate(-90 603.6 174.3)" textLength="7" lengthAdjust="spacingAndGlyphs" font-weight="bold" >L1</text>
<text x="603.6" y="275" fill="#ffff00" font-size="7" transform="rotate(-90 603.6 275)" textLength="7" lengthAdjust="spacingAndGlyphs" font-weight="bold" >L1</text>
<text x="648.7" y="174.3" fill="#ffff00" font-size="7" transform="rotate(-90 648.7 174.3)" textLength="12.4" lengthAdjust="spacingAndGlyphs" font-weight="bold" >KL2</text>
<text x="648.7" y="275" fill="#ffff00" font-size="7" transform="rotate(-90 648.7 275)" textLength="12.4" lengthAdjust="spacingAndGlyphs" font-weight="bold" >KL2</text>
<text x="647.9" y="224.3" fill="#ffff00" font-size="9" transform="rotate(-90 647.9 224.3)" textLength="13" lengthAdjust="spacingAndGlyphs" >KL3</text>
<text x="693.8" y="174.3" fill="#ffff00" font-size="7" transform="rotate(-90 693.8 174.3)" textLength="7" lengthAdjust="spacingAndGlyphs" font-weight="bold" >L1</text>
<text x="693.8" y="275" fill="#ffff00" font-size="7" transform="rotate(-90 693.8 275)" textLength="7" lengthAdjust="spacingAndGlyphs" font-weight="bold" >L1</text>
<text x="738.9" y="174.3" fill="#ffff00" font-size="7" transform="rotate(-90 738.9 174.3)" textLength="12.4" lengthAdjust="spacingAndGlyphs" font-weight="bold" >KL2</text>
<text x="738.9" y="275" fill="#ffff00" font-size="7" transform="rotate(-90 738.9 275)" textLength="12.4" lengthAdjust="spacingAndGlyphs" font-weight="bold" >KL2</text>
<text x="738.1" y="224.3" fill="#ffff00" font-size="9" transform="rotate(-90 738.1 224.3)" textLength="13" lengthAdjust="spacingAndGlyphs" >KL3</text>
<text x="784.0" y="174.3" fill="#ffff00" font-size="7" transform="rotate(-90 784.0 174.3)" textLength="12.4" lengthAdjust="spacingAndGlyphs" font-weight="bold" >KL2</text>
<text x="784.0" y="275" fill="#ffff00" font-size="7" transform="rotate(-90 784.0 275)" textLength="12.4" lengthAdjust="spacingAndGlyphs" font-weight="bold" >KL2</text>
<text x="783.2" y="224.3" fill="#ffff00" font-size="9" transform="rotate(-90 783.2 224.3)" textLength="13" lengthAdjust="spacingAndGlyphs" >KL3</text>
<text x="829.1" y="174.3" fill="#ffff00" font-size="7" transform="rotate(-90 829.1 174.3)" textLength="7" lengthAdjust="spacingAndGlyphs" font-weight="bold" >L1</text>
<text x="829.1" y="275" fill="#ffff00" font-size="7" transform="rotate(-90 829.1 275)" textLength="7" lengthAdjust="spacingAndGlyphs" font-weight="bold" >L1</text>
<text x="874.2" y="174.3" fill="#ffff00" font-size="7" transform="rotate(-90 874.2 174.3)" textLength="12.4" lengthAdjust="spacingAndGlyphs" font-weight="bold" >KL2</text>
<text x="874.2" y="275" fill="#ffff00" font-size="7" transform="rotate(-90 874.2 275)" textLength="12.4" lengthAdjust="spacingAndGlyphs" font-weight="bold" >KL2</text>
<text x="873.4" y="224.3" fill="#ffff00" font-size="9" transform="rotate(-90 873.4 224.3)" textLength="13" lengthAdjust="spacingAndGlyphs" >KL3</text>
<text x="416" y="177.7" fill="#ffffff" font-size="6" transform="rotate(-90 416 177.7)" textLength="30" lengthAdjust="spacingAndGlyphs" font-weight="bold" stroke="#fff" stroke-width="0.3">KL2 250x600</text>
<text x="467" y="164.3" fill="#ffffff" font-size="6.5" transform="rotate(-90 467 164.3)" textLength="27.5" lengthAdjust="spacingAndGlyphs" font-weight="bold" stroke="#fff" stroke-width="0.3">L1 250x500</text>
<text x="442" y="213.6" fill="#ffffff" font-size="6.5" textLength="29.5" lengthAdjust="spacingAndGlyphs" font-weight="bold" stroke="#fff" stroke-width="0.3">KL1 300x700</text>
<text x="443.5" y="233.3" fill="#ffffff" font-size="6.5" textLength="29" lengthAdjust="spacingAndGlyphs" font-weight="bold" stroke="#fff" stroke-width="0.3">KL1 300x700</text>
<text x="415" y="233.7" fill="#ffffff" font-size="6" transform="rotate(-90 415 233.7)" textLength="27" lengthAdjust="spacingAndGlyphs" font-weight="bold" stroke="#fff" stroke-width="0.3">KL3 250x500</text>
<text x="422.5" y="307.7" fill="#ffffff" font-size="6" transform="rotate(-90 422.5 307.7)" textLength="29" lengthAdjust="spacingAndGlyphs" font-weight="bold" stroke="#fff" stroke-width="0.3">KL2 250x600</text>
<text x="469" y="303.2" fill="#ffffff" font-size="6" transform="rotate(-90 469 303.2)" textLength="27" lengthAdjust="spacingAndGlyphs" font-weight="bold" stroke="#fff" stroke-width="0.3">L1 250x500</text>
<text x="218.5" y="233.8" fill="#ffffff" font-size="6" font-weight="bold" >1</text>
<text x="218.5" y="245.3" fill="#ffffff" font-size="6" font-weight="bold" >1</text>
<rect x="218" y="228" width="5" height="1" fill="#ffffff"/>
<rect x="218" y="246" width="5" height="1" fill="#ffffff"/>
<rect x="220" y="237" width="8" height="1" fill="#00ff00"/>
<rect x="223" y="234" width="2" height="7" fill="#00ff00"/>
<rect x="201" y="258" width="1" height="9" fill="#00ff00"/>
<rect x="198" y="262" width="7" height="2" fill="#00ff00"/>
<text x="193" y="261" fill="#ffffff" font-size="5.5" font-weight="bold" >2</text>
<text x="206" y="261" fill="#ffffff" font-size="5.5" font-weight="bold" >2</text>
<rect x="192.5" y="256" width="5.5" height="1" fill="#ffffff"/>
<rect x="205.5" y="256" width="5.5" height="1" fill="#ffffff"/>
<text x="513" y="415.3" fill="#ffffff" font-size="9" textLength="46" lengthAdjust="spacingAndGlyphs" font-weight="bold" stroke="#fff" stroke-width="0.4">结构平面布置图</text>
<rect x="512" y="416" width="48" height="2" fill="#00ff00"/>
<text x="563" y="415" fill="#ffffff" font-size="9" textLength="20" lengthAdjust="spacingAndGlyphs" >1:100</text>
<rect x="127" y="460" width="1" height="228" fill="#00ff00"/>
<rect x="396" y="460" width="1" height="228" fill="#00ff00"/>
<rect x="126.5" y="588.0" width="2" height="5" fill="#000"/>
<path d="M127.5 587.5 L129.0 588.5 L133.0 589.7 L127.5 590.1 L122.0 591.1 L126.0 592.1 L127.5 593.1" fill="none" stroke="#00ff00" stroke-width="1.1" shape-rendering="auto"/>
<rect x="395.5" y="588.0" width="2" height="5" fill="#000"/>
<path d="M396.5 587.5 L398.0 588.5 L402.0 589.7 L396.5 590.1 L391.0 591.1 L395.0 592.1 L396.5 593.1" fill="none" stroke="#00ff00" stroke-width="1.1" shape-rendering="auto"/>
<rect x="170" y="460" width="1" height="208" fill="#ff0000"/>
<rect x="350" y="460" width="1" height="208" fill="#ff0000"/>
<rect x="170" y="668" width="1" height="20" fill="#00ff00"/>
<rect x="350" y="668" width="1" height="20" fill="#00ff00"/>
<rect x="116" y="473" width="11" height="1" fill="#00ff00"/>
<rect x="116" y="646" width="11" height="1" fill="#00ff00"/>
<rect x="127" y="470" width="270" height="1" fill="#ffffff"/>
<rect x="127" y="478" width="270" height="1" fill="#ffffff"/>
<rect x="127" y="473" width="270" height="1" fill="#ff0000"/>
<rect x="127" y="641" width="270" height="1" fill="#ffffff"/>
<rect x="127" y="648" width="270" height="1" fill="#ffffff"/>
<rect x="127" y="646" width="270" height="1" fill="#ff0000"/>
<rect x="167" y="486" width="1" height="147" fill="#ffffff"/>
<rect x="173" y="486" width="1" height="147" fill="#ffffff"/>
<rect x="167" y="648" width="1" height="24" fill="#ffffff"/>
<rect x="173" y="648" width="1" height="24" fill="#ffffff"/>
<rect x="347" y="486" width="1" height="147" fill="#ffffff"/>
<rect x="354" y="486" width="1" height="147" fill="#ffffff"/>
<rect x="347" y="648" width="1" height="24" fill="#ffffff"/>
<rect x="354" y="648" width="1" height="24" fill="#ffffff"/>
<rect x="258" y="478" width="1" height="164" fill="#ffffff"/>
<rect x="263" y="478" width="1" height="164" fill="#ffffff"/>
<rect x="260" y="473" width="1" height="174" fill="#ff0000"/>
<rect x="165" y="470" width="11" height="16" fill="#dcdcdc"/>
<rect x="166" y="471" width="9" height="14" fill="#606060"/>
<rect x="345" y="470" width="11" height="16" fill="#dcdcdc"/>
<rect x="346" y="471" width="9" height="14" fill="#606060"/>
<rect x="165" y="633" width="11" height="16" fill="#dcdcdc"/>
<rect x="166" y="634" width="9" height="14" fill="#606060"/>
<rect x="345" y="633" width="11" height="16" fill="#dcdcdc"/>
<rect x="346" y="634" width="9" height="14" fill="#606060"/>
<rect x="110" y="672" width="306" height="1" fill="#00ff00"/>
<rect x="170" y="681" width="182" height="1" fill="#00ff00"/>
<path d="M169.0 684.0 l4 -4" stroke="#00ff00" shape-rendering="auto"/>
<path d="M349.5 684.0 l4 -4" stroke="#00ff00" shape-rendering="auto"/>
<path d="M262.5 673 L262.5 670.5 L264.5 668" fill="none" stroke="#00ff00" shape-rendering="auto"/>
<circle cx="111.2" cy="473.3" r="4.7" fill="none" stroke="#00ff00" shape-rendering="auto"/>
<text x="111.2" y="476.3" fill="#ffffff" font-size="8.5" text-anchor="middle" font-weight="bold" font-family="'Liberation Serif',serif">D</text>
<circle cx="111.2" cy="646.3" r="4.7" fill="none" stroke="#00ff00" shape-rendering="auto"/>
<text x="111.2" y="649.3" fill="#ffffff" font-size="8.5" text-anchor="middle" font-weight="bold" font-family="'Liberation Serif',serif">C</text>
<circle cx="171.5" cy="692.5" r="4.7" fill="none" stroke="#00ff00" shape-rendering="auto"/>
<text x="171.5" y="695.5" fill="#ffffff" font-size="8.5" text-anchor="middle" font-weight="bold" font-family="'Liberation Serif',serif">4</text>
<circle cx="351.5" cy="692.3" r="4.7" fill="none" stroke="#00ff00" shape-rendering="auto"/>
<text x="351.5" y="695.3" fill="#ffffff" font-size="8.5" text-anchor="middle" font-weight="bold" font-family="'Liberation Serif',serif">6</text>
<rect x="127" y="545" width="270" height="2" fill="#ff0000"/>
<rect x="231" y="474" width="2" height="198" fill="#ff0000"/>
<rect x="321" y="474" width="2" height="198" fill="#ff0000"/>
<path d="M232 475 q-3 -1 -3 4" fill="none" stroke="#ff0000" stroke-width="1.6" shape-rendering="auto"/>
<rect x="318" y="474" width="4" height="4" fill="#ff0000"/>
<path d="M229 641 l3.5 4 l3.5 -4" fill="none" stroke="#ff0000" stroke-width="1.3" shape-rendering="auto"/>
<rect x="319" y="641" width="5" height="4" fill="#ff0000"/>
<path d="M165 543.5 q3.5 0 4.5 2.5 q-1 2.5 -4.5 2.5 M176 543.5 q-3.5 0 -4.5 2.5 q1 2.5 4.5 2.5" fill="none" stroke="#ff0000" stroke-width="1.2" shape-rendering="auto"/>
<path d="M345 543.5 q3.5 0 4.5 2.5 q-1 2.5 -4.5 2.5 M356 543.5 q-3.5 0 -4.5 2.5 q1 2.5 4.5 2.5" fill="none" stroke="#ff0000" stroke-width="1.2" shape-rendering="auto"/>
<rect x="210" y="472" width="3" height="30" fill="#ff0000"/>
<rect x="210" y="472" width="7" height="1" fill="#ff0000"/>
<rect x="210" y="499" width="7" height="3" fill="#ff0000"/>
<rect x="207" y="477" width="1" height="25" fill="#00ff00"/>
<rect x="183" y="498" width="25" height="1" fill="#00ff00"/>
<path d="M206.0 481.0 l4 -4" stroke="#00ff00" shape-rendering="auto"/>
<path d="M206.0 501.0 l4 -4" stroke="#00ff00" shape-rendering="auto"/>
<text x="205.5" y="494.3" fill="#ffffff" font-size="6" transform="rotate(-90 205.5 494.3)" textLength="10.0" lengthAdjust="spacingAndGlyphs" font-weight="bold" stroke="#fff" stroke-width="0.2">1100</text>
<text x="183.8" y="497.5" fill="#ffffff" font-size="6" textLength="16.2" lengthAdjust="spacingAndGlyphs" font-weight="bold" stroke="#fff" stroke-width="0.2">&#934;8@200</text>
<rect x="301" y="472" width="3" height="30" fill="#ff0000"/>
<rect x="301" y="472" width="7" height="1" fill="#ff0000"/>
<rect x="301" y="499" width="7" height="3" fill="#ff0000"/>
<rect x="298" y="477" width="1" height="25" fill="#00ff00"/>
<rect x="273" y="498" width="26" height="1" fill="#00ff00"/>
<path d="M297.0 481.0 l4 -4" stroke="#00ff00" shape-rendering="auto"/>
<path d="M297.0 501.0 l4 -4" stroke="#00ff00" shape-rendering="auto"/>
<text x="296.5" y="494.3" fill="#ffffff" font-size="6" transform="rotate(-90 296.5 494.3)" textLength="10.0" lengthAdjust="spacingAndGlyphs" font-weight="bold" stroke="#fff" stroke-width="0.2">1100</text>
<text x="273.8" y="497.5" fill="#ffffff" font-size="6" textLength="16.2" lengthAdjust="spacingAndGlyphs" font-weight="bold" stroke="#fff" stroke-width="0.2">&#934;8@200</text>
<rect x="211" y="618" width="3" height="49" fill="#ff0000"/>
<rect x="211" y="618" width="7" height="2" fill="#ff0000"/>
<rect x="211" y="665" width="7" height="2" fill="#ff0000"/>
<rect x="209" y="615" width="1" height="54" fill="#00ff00"/>
<rect x="180" y="661" width="31" height="1" fill="#00ff00"/>
<path d="M208.0 621.0 l4 -4" stroke="#00ff00" shape-rendering="auto"/>
<path d="M208.0 644.0 l4 -4" stroke="#00ff00" shape-rendering="auto"/>
<path d="M208.0 651.0 l4 -4" stroke="#00ff00" shape-rendering="auto"/>
<path d="M208.0 669.0 l4 -4" stroke="#00ff00" shape-rendering="auto"/>
<text x="207.5" y="634.3" fill="#ffffff" font-size="6" transform="rotate(-90 207.5 634.3)" textLength="9.3" lengthAdjust="spacingAndGlyphs" font-weight="bold" stroke="#fff" stroke-width="0.2">1100</text>
<text x="207.5" y="660.2" fill="#ffffff" font-size="6" transform="rotate(-90 207.5 660.2)" textLength="5.8" lengthAdjust="spacingAndGlyphs" font-weight="bold" stroke="#fff" stroke-width="0.2">800</text>
<text x="182.2" y="660.3" fill="#ffffff" font-size="6" textLength="16.4" lengthAdjust="spacingAndGlyphs" font-weight="bold" stroke="#fff" stroke-width="0.2">&#934;8@200</text>
<rect x="302" y="618" width="3" height="49" fill="#ff0000"/>
<rect x="302" y="618" width="7" height="2" fill="#ff0000"/>
<rect x="302" y="665" width="7" height="2" fill="#ff0000"/>
<rect x="299" y="615" width="1" height="54" fill="#00ff00"/>
<rect x="270" y="661" width="31" height="1" fill="#00ff00"/>
<path d="M298.0 621.0 l4 -4" stroke="#00ff00" shape-rendering="auto"/>
<path d="M298.0 644.0 l4 -4" stroke="#00ff00" shape-rendering="auto"/>
<path d="M298.0 651.0 l4 -4" stroke="#00ff00" shape-rendering="auto"/>
<path d="M298.0 669.0 l4 -4" stroke="#00ff00" shape-rendering="auto"/>
<text x="297.5" y="634.3" fill="#ffffff" font-size="6" transform="rotate(-90 297.5 634.3)" textLength="9.3" lengthAdjust="spacingAndGlyphs" font-weight="bold" stroke="#fff" stroke-width="0.2">1100</text>
<text x="297.5" y="660.2" fill="#ffffff" font-size="6" transform="rotate(-90 297.5 660.2)" textLength="5.8" lengthAdjust="spacingAndGlyphs" font-weight="bold" stroke="#fff" stroke-width="0.2">800</text>
<text x="272.2" y="660.3" fill="#ffffff" font-size="6" textLength="16.4" lengthAdjust="spacingAndGlyphs" font-weight="bold" stroke="#fff" stroke-width="0.2">&#934;8@200</text>
<rect x="144" y="591" width="53" height="2" fill="#ff0000"/>
<rect x="144" y="591" width="2" height="7" fill="#ff0000"/>
<rect x="195" y="591" width="2" height="7" fill="#ff0000"/>
<rect x="144" y="605" width="24" height="1" fill="#00ff00"/>
<rect x="173" y="605" width="24" height="1" fill="#00ff00"/>
<rect x="144" y="602" width="1" height="7" fill="#00ff00"/>
<path d="M143.0 608.0 l4 -4" stroke="#00ff00" shape-rendering="auto"/>
<rect x="167" y="602" width="1" height="7" fill="#00ff00"/>
<path d="M166.0 608.0 l4 -4" stroke="#00ff00" shape-rendering="auto"/>
<rect x="173" y="602" width="1" height="7" fill="#00ff00"/>
<path d="M172.0 608.0 l4 -4" stroke="#00ff00" shape-rendering="auto"/>
<rect x="196" y="602" width="1" height="7" fill="#00ff00"/>
<path d="M195.0 608.0 l4 -4" stroke="#00ff00" shape-rendering="auto"/>
<line x1="144.5" y1="609" x2="144.5" y2="614" stroke="#00ff00" stroke-dasharray="1 2"/>
<line x1="196.5" y1="609" x2="196.5" y2="614" stroke="#00ff00" stroke-dasharray="1 2"/>
<line x1="167.5" y1="598" x2="167.5" y2="602" stroke="#00ff00" stroke-dasharray="1 1"/>
<line x1="173.5" y1="598" x2="173.5" y2="602" stroke="#00ff00" stroke-dasharray="1 1"/>
<text x="159.2" y="590.9" fill="#ffffff" font-size="6.3" textLength="22.6" lengthAdjust="spacingAndGlyphs" font-weight="bold" stroke="#fff" stroke-width="0.2">&#934;8@180</text>
<text x="150.9" y="604" fill="#ffffff" font-size="6" textLength="9.2" lengthAdjust="spacingAndGlyphs" font-weight="bold" stroke="#fff" stroke-width="0.2">1000</text>
<text x="180.4" y="604" fill="#ffffff" font-size="6" textLength="9.2" lengthAdjust="spacingAndGlyphs" font-weight="bold" stroke="#fff" stroke-width="0.2">1000</text>
<rect x="234" y="591" width="53" height="2" fill="#ff0000"/>
<rect x="234" y="591" width="2" height="7" fill="#ff0000"/>
<rect x="285" y="591" width="2" height="7" fill="#ff0000"/>
<rect x="234" y="605" width="25" height="1" fill="#00ff00"/>
<rect x="263" y="605" width="24" height="1" fill="#00ff00"/>
<rect x="234" y="602" width="1" height="7" fill="#00ff00"/>
<path d="M233.0 608.0 l4 -4" stroke="#00ff00" shape-rendering="auto"/>
<rect x="258" y="602" width="1" height="7" fill="#00ff00"/>
<path d="M257.0 608.0 l4 -4" stroke="#00ff00" shape-rendering="auto"/>
<rect x="263" y="602" width="1" height="7" fill="#00ff00"/>
<path d="M262.0 608.0 l4 -4" stroke="#00ff00" shape-rendering="auto"/>
<rect x="286" y="602" width="1" height="7" fill="#00ff00"/>
<path d="M285.0 608.0 l4 -4" stroke="#00ff00" shape-rendering="auto"/>
<line x1="234.5" y1="609" x2="234.5" y2="614" stroke="#00ff00" stroke-dasharray="1 2"/>
<line x1="286.5" y1="609" x2="286.5" y2="614" stroke="#00ff00" stroke-dasharray="1 2"/>
<line x1="258.5" y1="598" x2="258.5" y2="602" stroke="#00ff00" stroke-dasharray="1 1"/>
<line x1="263.5" y1="598" x2="263.5" y2="602" stroke="#00ff00" stroke-dasharray="1 1"/>
<text x="249.2" y="590.9" fill="#ffffff" font-size="6.3" textLength="22.6" lengthAdjust="spacingAndGlyphs" font-weight="bold" stroke="#fff" stroke-width="0.2">&#934;8@180</text>
<text x="241.4" y="604" fill="#ffffff" font-size="6" textLength="9.2" lengthAdjust="spacingAndGlyphs" font-weight="bold" stroke="#fff" stroke-width="0.2">1000</text>
<text x="270.4" y="604" fill="#ffffff" font-size="6" textLength="9.2" lengthAdjust="spacingAndGlyphs" font-weight="bold" stroke="#fff" stroke-width="0.2">1000</text>
<rect x="325" y="591" width="52" height="2" fill="#ff0000"/>
<rect x="325" y="591" width="2" height="7" fill="#ff0000"/>
<rect x="375" y="591" width="2" height="7" fill="#ff0000"/>
<rect x="325" y="605" width="23" height="1" fill="#00ff00"/>
<rect x="354" y="605" width="23" height="1" fill="#00ff00"/>
<rect x="325" y="602" width="1" height="7" fill="#00ff00"/>
<path d="M324.0 608.0 l4 -4" stroke="#00ff00" shape-rendering="auto"/>
<rect x="347" y="602" width="1" height="7" fill="#00ff00"/>
<path d="M346.0 608.0 l4 -4" stroke="#00ff00" shape-rendering="auto"/>
<rect x="354" y="602" width="1" height="7" fill="#00ff00"/>
<path d="M353.0 608.0 l4 -4" stroke="#00ff00" shape-rendering="auto"/>
<rect x="376" y="602" width="1" height="7" fill="#00ff00"/>
<path d="M375.0 608.0 l4 -4" stroke="#00ff00" shape-rendering="auto"/>
<line x1="325.5" y1="609" x2="325.5" y2="614" stroke="#00ff00" stroke-dasharray="1 2"/>
<line x1="376.5" y1="609" x2="376.5" y2="614" stroke="#00ff00" stroke-dasharray="1 2"/>
<line x1="347.5" y1="598" x2="347.5" y2="602" stroke="#00ff00" stroke-dasharray="1 1"/>
<line x1="354.5" y1="598" x2="354.5" y2="602" stroke="#00ff00" stroke-dasharray="1 1"/>
<text x="339.7" y="590.9" fill="#ffffff" font-size="6.3" textLength="22.6" lengthAdjust="spacingAndGlyphs" font-weight="bold" stroke="#fff" stroke-width="0.2">&#934;8@180</text>
<text x="331.4" y="604" fill="#ffffff" font-size="6" textLength="9.2" lengthAdjust="spacingAndGlyphs" font-weight="bold" stroke="#fff" stroke-width="0.2">1000</text>
<text x="360.9" y="604" fill="#ffffff" font-size="6" textLength="9.2" lengthAdjust="spacingAndGlyphs" font-weight="bold" stroke="#fff" stroke-width="0.2">1000</text>
<text x="136.3" y="544" fill="#ffffff" font-size="6.3" textLength="22.7" lengthAdjust="spacingAndGlyphs" font-weight="bold" stroke="#fff" stroke-width="0.2">&#934;8@160</text>
<text x="202" y="544" fill="#ffffff" font-size="6.3" textLength="22.2" lengthAdjust="spacingAndGlyphs" font-weight="bold" stroke="#fff" stroke-width="0.2">&#934;8@160</text>
<text x="292.1" y="544" fill="#ffffff" font-size="6.3" textLength="23.1" lengthAdjust="spacingAndGlyphs" font-weight="bold" stroke="#fff" stroke-width="0.2">&#934;8@160</text>
<text x="368.3" y="544" fill="#ffffff" font-size="6.3" textLength="22.9" lengthAdjust="spacingAndGlyphs" font-weight="bold" stroke="#fff" stroke-width="0.2">&#934;8@160</text>
<text x="229.8" y="525.2" fill="#ffffff" font-size="6.3" transform="rotate(-90 229.8 525.2)" textLength="23.4" lengthAdjust="spacingAndGlyphs" font-weight="bold" stroke="#fff" stroke-width="0.2">&#934;8@200</text>
<text x="319.6" y="525.2" fill="#ffffff" font-size="6.3" transform="rotate(-90 319.6 525.2)" textLength="23.4" lengthAdjust="spacingAndGlyphs" font-weight="bold" stroke="#fff" stroke-width="0.2">&#934;8@200</text>
<text x="231.2" y="671" fill="#ffffff" font-size="6.3" transform="rotate(-90 231.2 671)" textLength="24" lengthAdjust="spacingAndGlyphs" font-weight="bold" stroke="#fff" stroke-width="0.2">&#934;8@200</text>
<text x="321" y="671" fill="#ffffff" font-size="6.3" transform="rotate(-90 321 671)" textLength="24" lengthAdjust="spacingAndGlyphs" font-weight="bold" stroke="#fff" stroke-width="0.2">&#934;8@200</text>
<text x="206" y="570" fill="#ffffff" font-size="7" textLength="11.5" lengthAdjust="spacingAndGlyphs" font-weight="bold" stroke="#fff" stroke-width="0.2">LB1</text>
<text x="302.7" y="567.5" fill="#ffffff" font-size="7" textLength="11.3" lengthAdjust="spacingAndGlyphs" font-weight="bold" stroke="#fff" stroke-width="0.2">LB1</text>
<text x="255.4" y="680" fill="#ffffff" font-size="6" textLength="11.2" lengthAdjust="spacingAndGlyphs" font-weight="bold" stroke="#fff" stroke-width="0.2">7200</text>
<text x="227" y="711" fill="#ffffff" font-size="9.5" textLength="45" lengthAdjust="spacingAndGlyphs" font-weight="bold" stroke="#fff" stroke-width="0.35">LB1板配筋图</text>
<rect x="226" y="712" width="47" height="1" fill="#00ff00"/>
<text x="274.7" y="710.5" fill="#ffffff" font-size="9" textLength="16.4" lengthAdjust="spacingAndGlyphs" >1:50</text>
<rect x="459" y="524" width="307" height="1" fill="#00ff00"/>
<rect x="501" y="632" width="219" height="1" fill="#00ff00"/>
<rect x="476" y="524" width="1" height="107" fill="#00ff00"/>
<rect x="745" y="524" width="1" height="107" fill="#00ff00"/>
<rect x="475.5" y="575.0" width="2" height="5" fill="#000"/>
<path d="M476.5 574.5 L478.0 575.5 L482.0 576.7 L476.5 577.1 L471.0 578.1 L475.0 579.1 L476.5 580.1" fill="none" stroke="#00ff00" stroke-width="1.1" shape-rendering="auto"/>
<rect x="744.5" y="574.0" width="2" height="5" fill="#000"/>
<path d="M745.5 573.5 L747.0 574.5 L751.0 575.7 L745.5 576.1 L740.0 577.1 L744.0 578.1 L745.5 579.1" fill="none" stroke="#00ff00" stroke-width="1.1" shape-rendering="auto"/>
<rect x="464" y="555" width="13" height="1" fill="#00ff00"/>
<rect x="464" y="615" width="13" height="1" fill="#00ff00"/>
<rect x="477" y="550" width="268" height="1" fill="#ffffff"/>
<rect x="477" y="558" width="268" height="1" fill="#ffffff"/>
<rect x="477" y="555" width="268" height="1" fill="#ff0000"/>
<rect x="477" y="613" width="268" height="1" fill="#ffffff"/>
<rect x="477" y="620" width="268" height="1" fill="#ffffff"/>
<rect x="477" y="615" width="268" height="1" fill="#ff0000"/>
<rect x="516" y="525" width="1" height="107" fill="#ffffff"/>
<rect x="522" y="525" width="1" height="107" fill="#ffffff"/>
<rect x="519" y="525" width="1" height="107" fill="#ff0000"/>
<rect x="519" y="632" width="1" height="19" fill="#00ff00"/>
<rect x="697" y="525" width="1" height="107" fill="#ffffff"/>
<rect x="703" y="525" width="1" height="107" fill="#ffffff"/>
<rect x="700" y="525" width="1" height="107" fill="#ff0000"/>
<rect x="700" y="632" width="1" height="19" fill="#00ff00"/>
<rect x="607" y="525" width="1" height="26" fill="#ffffff"/>
<rect x="612" y="525" width="1" height="26" fill="#ffffff"/>
<rect x="609" y="525" width="1" height="31" fill="#ff0000"/>
<rect x="607" y="620" width="1" height="12" fill="#ffffff"/>
<rect x="612" y="620" width="1" height="12" fill="#ffffff"/>
<rect x="609" y="615" width="1" height="17" fill="#ff0000"/>
<path d="M610.5 525 L610.5 522.5 L612.5 520" fill="none" stroke="#00ff00" shape-rendering="auto"/>
<path d="M609.5 633 L609.5 630.5 L611.5 628" fill="none" stroke="#00ff00" shape-rendering="auto"/>
<rect x="514" y="543" width="11" height="16" fill="#dcdcdc"/>
<rect x="515" y="544" width="9" height="14" fill="#606060"/>
<rect x="695" y="543" width="11" height="16" fill="#dcdcdc"/>
<rect x="696" y="544" width="9" height="14" fill="#606060"/>
<rect x="514" y="613" width="11" height="16" fill="#dcdcdc"/>
<rect x="515" y="614" width="9" height="14" fill="#606060"/>
<rect x="695" y="613" width="11" height="16" fill="#dcdcdc"/>
<rect x="696" y="614" width="9" height="14" fill="#606060"/>
<rect x="519" y="645" width="182" height="1" fill="#00ff00"/>
<path d="M518.0 648.0 l4 -4" stroke="#00ff00" shape-rendering="auto"/>
<path d="M699.0 648.0 l4 -4" stroke="#00ff00" shape-rendering="auto"/>
<circle cx="458.9" cy="555.5" r="4.7" fill="none" stroke="#00ff00" shape-rendering="auto"/>
<text x="458.9" y="558.5" fill="#ffffff" font-size="8.5" text-anchor="middle" font-weight="bold" font-family="'Liberation Serif',serif">C</text>
<circle cx="458.9" cy="615.6" r="4.7" fill="none" stroke="#00ff00" shape-rendering="auto"/>
<text x="458.9" y="618.6" fill="#ffffff" font-size="8.5" text-anchor="middle" font-weight="bold" font-family="'Liberation Serif',serif">B</text>
<circle cx="519.6" cy="655.8" r="4.7" fill="none" stroke="#00ff00" shape-rendering="auto"/>
<text x="519.6" y="658.8" fill="#ffffff" font-size="8.5" text-anchor="middle" font-weight="bold" font-family="'Liberation Serif',serif">4</text>
<circle cx="700.4" cy="655.8" r="4.7" fill="none" stroke="#00ff00" shape-rendering="auto"/>
<text x="700.4" y="658.8" fill="#ffffff" font-size="8.5" text-anchor="middle" font-weight="bold" font-family="'Liberation Serif',serif">6</text>
<rect x="561" y="527" width="2" height="50" fill="#ff0000"/>
<rect x="561" y="527" width="7" height="2" fill="#ff0000"/>
<rect x="561" y="575" width="7" height="2" fill="#ff0000"/>
<rect x="558" y="525" width="1" height="54" fill="#00ff00"/>
<path d="M557.0 530.0 l4 -4" stroke="#00ff00" shape-rendering="auto"/>
<path d="M557.0 553.0 l4 -4" stroke="#00ff00" shape-rendering="auto"/>
<path d="M557.0 561.0 l4 -4" stroke="#00ff00" shape-rendering="auto"/>
<path d="M557.0 579.0 l4 -4" stroke="#00ff00" shape-rendering="auto"/>
<text x="557" y="543.4" fill="#ffffff" font-size="6" transform="rotate(-90 557 543.4)" textLength="8.4" lengthAdjust="spacingAndGlyphs" font-weight="bold" stroke="#fff" stroke-width="0.2">700</text>
<text x="557" y="570.5" fill="#ffffff" font-size="6" transform="rotate(-90 557 570.5)" textLength="7.0" lengthAdjust="spacingAndGlyphs" font-weight="bold" stroke="#fff" stroke-width="0.2">800</text>
<text x="571.2" y="570.5" fill="#ffffff" font-size="6" textLength="16.7" lengthAdjust="spacingAndGlyphs" font-weight="bold" stroke="#fff" stroke-width="0.2">&#934;8@200</text>
<rect x="563" y="571" width="28" height="1" fill="#00ff00"/>
<rect x="592" y="525" width="3" height="29" fill="#ff0000"/>
<rect x="590" y="549" width="5" height="5" fill="#ff0000"/>
<rect x="647" y="525" width="3" height="29" fill="#ff0000"/>
<rect x="645" y="549" width="5" height="5" fill="#ff0000"/>
<rect x="647" y="557" width="3" height="58" fill="#ff0000"/>
<rect x="645" y="558" width="5" height="4" fill="#ff0000"/>
<rect x="645" y="610" width="5" height="5" fill="#ff0000"/>
<text x="591.2" y="543.4" fill="#ffffff" font-size="6.3" transform="rotate(-90 591.2 543.4)" textLength="23.4" lengthAdjust="spacingAndGlyphs" font-weight="bold" stroke="#fff" stroke-width="0.2">&#934;8@200</text>
<text x="646.8" y="543.4" fill="#ffffff" font-size="6.3" transform="rotate(-90 646.8 543.4)" textLength="23.4" lengthAdjust="spacingAndGlyphs" font-weight="bold" stroke="#fff" stroke-width="0.2">&#934;8@200</text>
<text x="646.8" y="590.2" fill="#ffffff" font-size="6.3" transform="rotate(-90 646.8 590.2)" textLength="23.4" lengthAdjust="spacingAndGlyphs" font-weight="bold" stroke="#fff" stroke-width="0.2">&#934;8@200</text>
<rect x="481" y="579" width="77" height="2" fill="#ff0000"/>
<rect x="481" y="579" width="2" height="6" fill="#ff0000"/>
<rect x="556" y="579" width="2" height="6" fill="#ff0000"/>
<rect x="481" y="590" width="36" height="1" fill="#00ff00"/>
<rect x="522" y="590" width="36" height="1" fill="#00ff00"/>
<rect x="481" y="587" width="1" height="7" fill="#00ff00"/>
<path d="M480.0 593.0 l4 -4" stroke="#00ff00" shape-rendering="auto"/>
<rect x="516" y="587" width="1" height="7" fill="#00ff00"/>
<path d="M515.0 593.0 l4 -4" stroke="#00ff00" shape-rendering="auto"/>
<rect x="522" y="587" width="1" height="7" fill="#00ff00"/>
<path d="M521.0 593.0 l4 -4" stroke="#00ff00" shape-rendering="auto"/>
<rect x="557" y="587" width="1" height="7" fill="#00ff00"/>
<path d="M556.0 593.0 l4 -4" stroke="#00ff00" shape-rendering="auto"/>
<line x1="516.5" y1="582" x2="516.5" y2="587" stroke="#00ff00" stroke-dasharray="1 1"/>
<line x1="522.5" y1="582" x2="522.5" y2="587" stroke="#00ff00" stroke-dasharray="1 1"/>
<rect x="661" y="579" width="78" height="2" fill="#ff0000"/>
<rect x="661" y="579" width="2" height="6" fill="#ff0000"/>
<rect x="737" y="579" width="2" height="6" fill="#ff0000"/>
<rect x="661" y="590" width="37" height="1" fill="#00ff00"/>
<rect x="703" y="590" width="36" height="1" fill="#00ff00"/>
<rect x="661" y="587" width="1" height="7" fill="#00ff00"/>
<path d="M660.0 593.0 l4 -4" stroke="#00ff00" shape-rendering="auto"/>
<rect x="697" y="587" width="1" height="7" fill="#00ff00"/>
<path d="M696.0 593.0 l4 -4" stroke="#00ff00" shape-rendering="auto"/>
<rect x="703" y="587" width="1" height="7" fill="#00ff00"/>
<path d="M702.0 593.0 l4 -4" stroke="#00ff00" shape-rendering="auto"/>
<rect x="738" y="587" width="1" height="7" fill="#00ff00"/>
<path d="M737.0 593.0 l4 -4" stroke="#00ff00" shape-rendering="auto"/>
<line x1="697.5" y1="582" x2="697.5" y2="587" stroke="#00ff00" stroke-dasharray="1 1"/>
<line x1="703.5" y1="582" x2="703.5" y2="587" stroke="#00ff00" stroke-dasharray="1 1"/>
<text x="495.1" y="577.7" fill="#ffffff" font-size="6.3" textLength="22.6" lengthAdjust="spacingAndGlyphs" font-weight="bold" stroke="#fff" stroke-width="0.2">&#934;8@200</text>
<text x="676" y="577.7" fill="#ffffff" font-size="6.3" textLength="22.6" lengthAdjust="spacingAndGlyphs" font-weight="bold" stroke="#fff" stroke-width="0.2">&#934;8@200</text>
<text x="494.3" y="589.5" fill="#ffffff" font-size="6" textLength="10.0" lengthAdjust="spacingAndGlyphs" font-weight="bold" stroke="#fff" stroke-width="0.2">1000</text>
<text x="535.3" y="589.5" fill="#ffffff" font-size="6" textLength="9.7" lengthAdjust="spacingAndGlyphs" font-weight="bold" stroke="#fff" stroke-width="0.2">1000</text>
<text x="675.2" y="589.5" fill="#ffffff" font-size="6" textLength="10.0" lengthAdjust="spacingAndGlyphs" font-weight="bold" stroke="#fff" stroke-width="0.2">1000</text>
<text x="715.3" y="589.5" fill="#ffffff" font-size="6" textLength="9.7" lengthAdjust="spacingAndGlyphs" font-weight="bold" stroke="#fff" stroke-width="0.2">1000</text>
<rect x="521" y="606" width="180" height="2" fill="#ff0000"/>
<rect x="521" y="604" width="4" height="5" fill="#ff0000"/>
<rect x="696" y="604" width="5" height="5" fill="#ff0000"/>
<text x="601.3" y="604.8" fill="#ffffff" font-size="6.3" textLength="22.6" lengthAdjust="spacingAndGlyphs" font-weight="bold" stroke="#fff" stroke-width="0.2">&#934;8@200</text>
<text x="601.8" y="591" fill="#ffffff" font-size="7" textLength="12.0" lengthAdjust="spacingAndGlyphs" font-weight="bold" stroke="#fff" stroke-width="0.2">LB2</text>
<text x="603.7" y="643.7" fill="#ffffff" font-size="6" textLength="12.6" lengthAdjust="spacingAndGlyphs" font-weight="bold" stroke="#fff" stroke-width="0.2">7200</text>
<text x="585" y="668" fill="#ffffff" font-size="9.5" textLength="44" lengthAdjust="spacingAndGlyphs" font-weight="bold" stroke="#fff" stroke-width="0.35">LB2板配筋图</text>
<rect x="584" y="669" width="47" height="2" fill="#00ff00"/>
<text x="631.6" y="667" fill="#ffffff" font-size="9" textLength="17" lengthAdjust="spacingAndGlyphs" >1:50</text>
<text x="858.7" y="505" fill="#ffffff" font-size="10.5" textLength="10.5" lengthAdjust="spacingAndGlyphs" font-weight="bold" >说明:</text>
<text x="870" y="517.5" fill="#ffffff" font-size="8.2" textLength="40" lengthAdjust="spacingAndGlyphs" font-weight="bold" >1.图上标高以米计;</text>
<text x="870" y="530" fill="#ffffff" font-size="8.2" textLength="58" lengthAdjust="spacingAndGlyphs" font-weight="bold" >2.未标注的板厚为100mm;</text>
<text x="870" y="542.2" fill="#ffffff" font-size="8.2" textLength="136" lengthAdjust="spacingAndGlyphs" font-weight="bold" >3.边柱尺寸为500X500mm; 中柱尺寸为600X600mm;</text>
<text x="870" y="553.7" fill="#ffffff" font-size="8.2" textLength="115" lengthAdjust="spacingAndGlyphs" font-weight="bold" >4.梁轴线除注明外均以轴线居中或与柱边平齐布置。</text>
<rect x="868" y="706" width="193" height="1" fill="#ffffff"/>
<rect x="868" y="706" width="1" height="43" fill="#ffffff"/>
<rect x="890" y="706" width="1" height="43" fill="#ffffff"/>
<rect x="916" y="706" width="1" height="43" fill="#ffffff"/>
<rect x="1018" y="706" width="1" height="43" fill="#ffffff"/>
<rect x="1037" y="706" width="1" height="43" fill="#ffffff"/>
<rect x="943" y="725" width="1" height="24" fill="#ffffff"/>
<rect x="868" y="715" width="49" height="1" fill="#ffffff"/>
<rect x="868" y="721" width="49" height="1" fill="#ffffff"/>
<rect x="868" y="728" width="49" height="1" fill="#ffffff"/>
<rect x="868" y="736" width="49" height="1" fill="#ffffff"/>
<rect x="868" y="743" width="49" height="1" fill="#ffffff"/>
<rect x="916" y="725" width="102" height="1" fill="#ffffff"/>
<rect x="916" y="739" width="102" height="1" fill="#ffffff"/>
<rect x="1018" y="715" width="43" height="1" fill="#ffffff"/>
<rect x="1018" y="724" width="43" height="1" fill="#ffffff"/>
<rect x="1018" y="742" width="43" height="1" fill="#ffffff"/>
<text x="871" y="713.5" fill="#ffffff" font-size="4.6" textLength="17" lengthAdjust="spacingAndGlyphs" font-weight="bold" stroke="#fff" stroke-width="0.45">院 长</text>
<text x="896" y="713.5" fill="#ffffff" font-size="4.6" textLength="12" lengthAdjust="spacingAndGlyphs" font-weight="bold" stroke="#fff" stroke-width="0.45">某某某</text>
<text x="871" y="720.5" fill="#ffffff" font-size="4.6" textLength="17" lengthAdjust="spacingAndGlyphs" font-weight="bold" stroke="#fff" stroke-width="0.45">审 定</text>
<text x="896" y="720.5" fill="#ffffff" font-size="4.6" textLength="12" lengthAdjust="spacingAndGlyphs" font-weight="bold" stroke="#fff" stroke-width="0.45">李 明</text>
<text x="871" y="727.5" fill="#ffffff" font-size="4.6" textLength="17" lengthAdjust="spacingAndGlyphs" font-weight="bold" stroke="#fff" stroke-width="0.45">审 核</text>
<text x="896" y="727.5" fill="#ffffff" font-size="4.6" textLength="12" lengthAdjust="spacingAndGlyphs" font-weight="bold" stroke="#fff" stroke-width="0.45">王小华</text>
<text x="871" y="735" fill="#ffffff" font-size="4.6" textLength="17" lengthAdjust="spacingAndGlyphs" font-weight="bold" stroke="#fff" stroke-width="0.45">校 对</text>
<text x="896" y="735" fill="#ffffff" font-size="4.6" textLength="12" lengthAdjust="spacingAndGlyphs" font-weight="bold" stroke="#fff" stroke-width="0.45">张 强</text>
<text x="871" y="742" fill="#ffffff" font-size="4.6" textLength="17" lengthAdjust="spacingAndGlyphs" font-weight="bold" stroke="#fff" stroke-width="0.45">设 计</text>
<text x="896" y="742" fill="#ffffff" font-size="4.6" textLength="12" lengthAdjust="spacingAndGlyphs" font-weight="bold" stroke="#fff" stroke-width="0.45">刘大伟</text>
<text x="871" y="748.5" fill="#ffffff" font-size="4.6" textLength="17" lengthAdjust="spacingAndGlyphs" font-weight="bold" stroke="#fff" stroke-width="0.45">制 图</text>
<text x="949.2" y="721" fill="#ffffff" font-size="8.5" textLength="36.6" lengthAdjust="spacingAndGlyphs" font-weight="bold" stroke="#fff" stroke-width="0.45">某框架施工图纸</text>
<text x="921" y="735" fill="#ffffff" font-size="4.8" textLength="13" lengthAdjust="spacingAndGlyphs" font-weight="bold" stroke="#fff" stroke-width="0.45">工程名称</text>
<text x="946.3" y="735" fill="#ffffff" font-size="4.8" textLength="67.4" lengthAdjust="spacingAndGlyphs" font-weight="bold" stroke="#fff" stroke-width="0.45">某某市某某区综合办公楼框架结构施工图</text>
<text x="921" y="747" fill="#ffffff" font-size="4.8" textLength="15.5" lengthAdjust="spacingAndGlyphs" font-weight="bold" stroke="#fff" stroke-width="0.45">图 名</text>
<text x="962.8" y="747.3" fill="#ffffff" font-size="5" textLength="30" lengthAdjust="spacingAndGlyphs" font-weight="bold" stroke="#fff" stroke-width="0.45">结构平面布置图</text>
<text x="1021" y="713.5" fill="#ffffff" font-size="4.6" textLength="13" lengthAdjust="spacingAndGlyphs" font-weight="bold" stroke="#fff" stroke-width="0.45">工程号</text>
<text x="1021" y="722.5" fill="#ffffff" font-size="4.6" textLength="13" lengthAdjust="spacingAndGlyphs" font-weight="bold" stroke="#fff" stroke-width="0.45">图 号</text>
<text x="1021" y="732" fill="#ffffff" font-size="4.6" textLength="13" lengthAdjust="spacingAndGlyphs" font-weight="bold" stroke="#fff" stroke-width="0.45">比 例</text>
<text x="1021" y="738.5" fill="#ffffff" font-size="4.6" textLength="13" lengthAdjust="spacingAndGlyphs" font-weight="bold" stroke="#fff" stroke-width="0.45">日 期</text>
<text x="1021" y="748" fill="#ffffff" font-size="4.6" textLength="13" lengthAdjust="spacingAndGlyphs" font-weight="bold" stroke="#fff" stroke-width="0.45">阶 段</text>
<text x="1043.6" y="713.5" fill="#ffffff" font-size="4.6" textLength="8.2" lengthAdjust="spacingAndGlyphs" font-weight="bold" stroke="#fff" stroke-width="0.45">2008</text>
<text x="1046" y="722" fill="#ffffff" font-size="5" textLength="5" lengthAdjust="spacingAndGlyphs" >03</text>
<text x="1045" y="732" fill="#ffffff" font-size="4.6" textLength="9" lengthAdjust="spacingAndGlyphs" font-weight="bold" stroke="#fff" stroke-width="0.45">1:100</text>
<text x="1044" y="737.7" fill="#ffffff" font-size="4.6" textLength="10" lengthAdjust="spacingAndGlyphs" font-weight="bold" stroke="#fff" stroke-width="0.45">2008.06</text>
<text x="1040.7" y="748.5" fill="#ffffff" font-size="5" textLength="16.5" lengthAdjust="spacingAndGlyphs" font-weight="bold" stroke="#fff" stroke-width="0.45">施工图设计</text>
</svg>
</body></html>
